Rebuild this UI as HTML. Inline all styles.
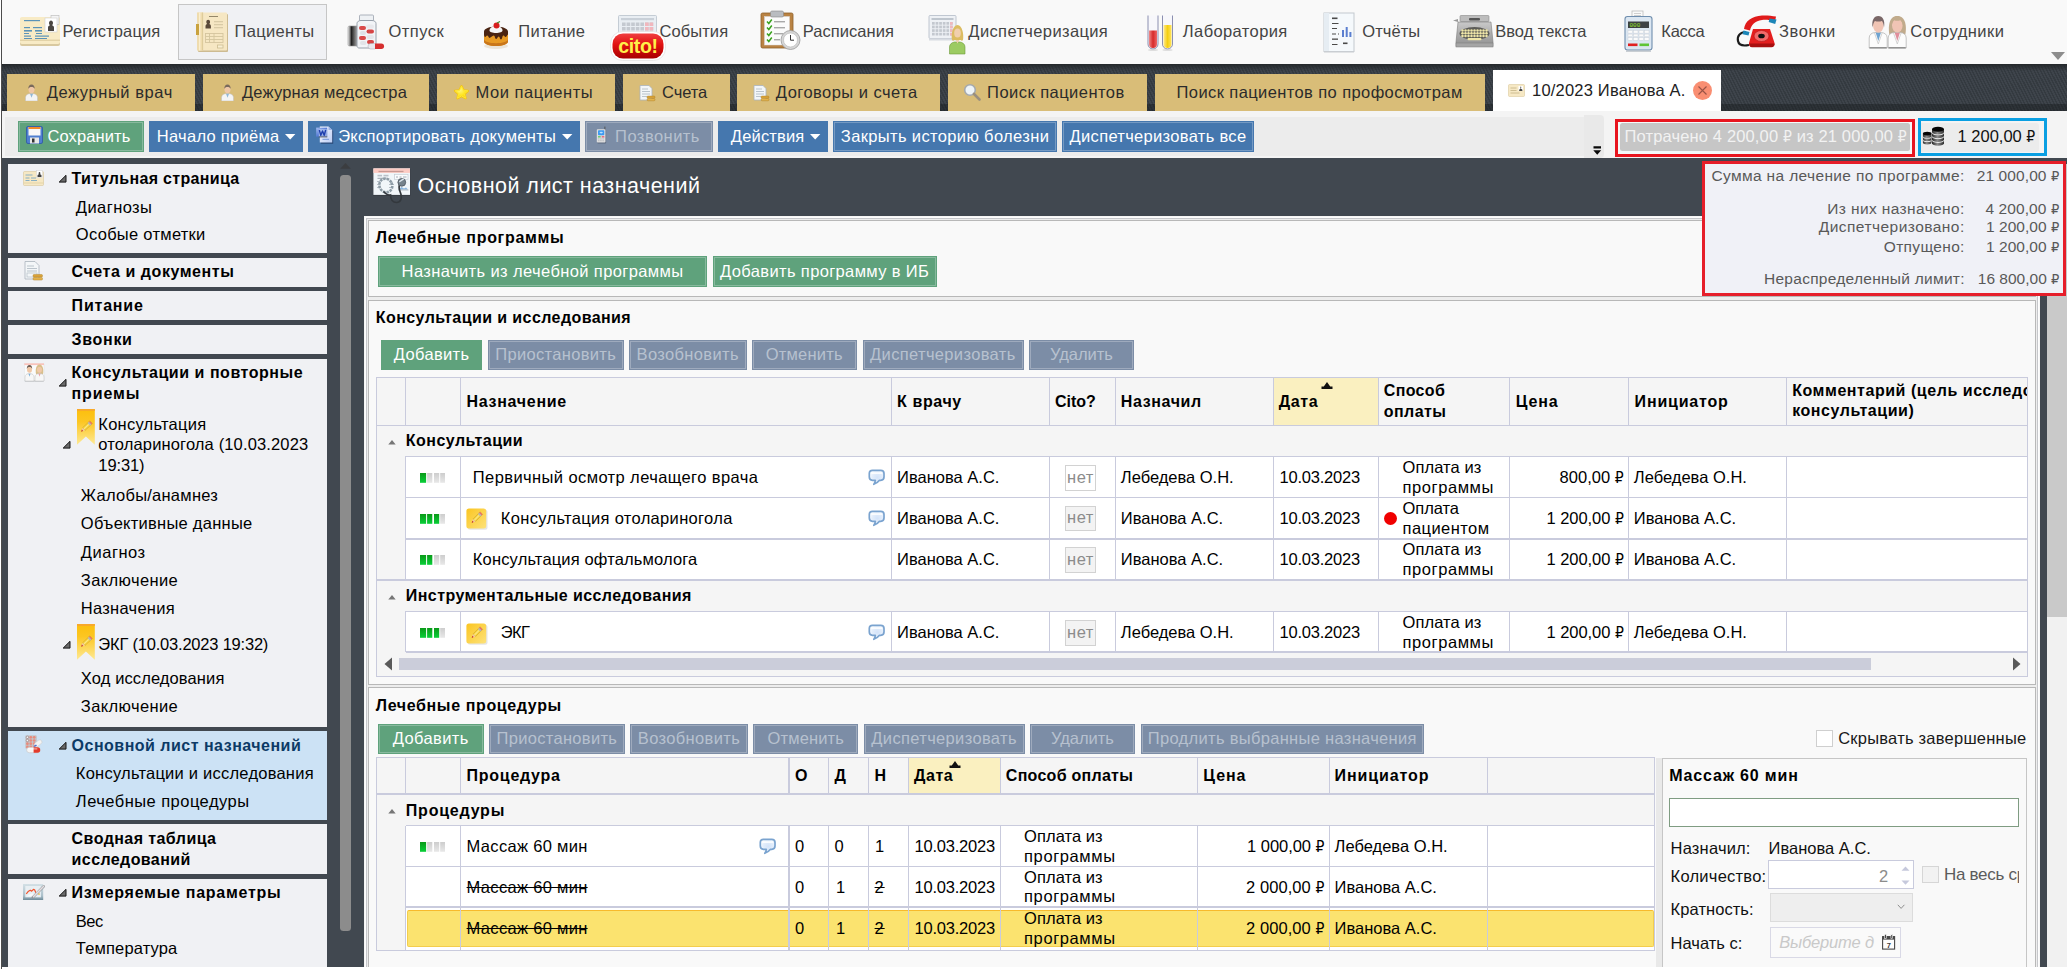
<!DOCTYPE html>
<html lang="ru"><head><meta charset="utf-8"><title>Основной лист назначений</title>
<style>

html,body{margin:0;padding:0}
body{width:2067px;height:969px;overflow:hidden;position:relative;background:#414850;font-family:"Liberation Sans","DejaVu Sans",sans-serif;font-size:17px;color:#000}
div,span.t,svg{position:absolute;box-sizing:border-box}
span.t{white-space:nowrap}
.rub{font-family:"DejaVu Sans Condensed","DejaVu Sans",sans-serif;font-size:.94em}
.ib{outline:1px solid rgba(255,255,255,.26);outline-offset:-2.2px}
.st{text-decoration:line-through;text-decoration-thickness:1.5px}

</style></head>
<body>
<div style="left:0px;top:0px;width:2067px;height:64px;background:#f9f9f9;"></div>
<div style="left:178px;top:4px;width:148.5px;height:55.5px;background:#f0f1f4;border:1px solid #c6c6c6;"></div>
<svg style="left:19px;top:14px" width="42" height="34" viewBox="0 0 42 34"><rect x="1" y="4" width="40" height="28" rx="2" fill="#d9c9a0"/><rect x="1" y="3" width="40" height="27" rx="2" fill="#f8ebc6"/><rect x="1" y="25.5" width="40" height="1.5" fill="#e3d3a8"/><g fill="#5b93b8"><rect x="5" y="6" width="16" height="1.2"/><rect x="5" y="13" width="6" height="1.2"/><rect x="14" y="13" width="9" height="1.2"/><rect x="5" y="16" width="8" height="1.6"/><rect x="16" y="16" width="7" height="1.6"/><rect x="5" y="19" width="5" height="1"/><rect x="17" y="19" width="6" height="1"/><rect x="5" y="21.5" width="7" height="1.2"/><rect x="16" y="21.5" width="14" height="1.2"/><rect x="5" y="24" width="8" height="1"/><rect x="16" y="24" width="12" height="1"/></g><rect x="32" y="1.5" width="8" height="9" fill="#f4f4f4" stroke="#b8b8b8" stroke-width=".6"/><rect x="26" y="4" width="12" height="14" fill="#fff" stroke="#cfcfcf" stroke-width=".6"/><path d="M29 17v-3.5c0-1.5 1.3-2 2-2.3-.8-.6-1-1.400-1-2.400 0-1.500 1-2.400 2-2.400s2 .9 2 2.400c0 1-.2 1.800-1 2.400.7.300 2 .8 2 2.300V17z" fill="#4a4642"/></svg>
<span class="t" style="left:62.5px;top:21px;line-height:21px;font-size:16.5px;color:#444;letter-spacing:0.13px;">Регистрация</span>
<svg style="left:196px;top:11px" width="33" height="41" viewBox="0 0 33 41"><rect x="2" y="3" width="30" height="38" rx="1" fill="#cdbb92"/><rect x="1" y="1.500" width="30" height="38" rx="1" fill="#f6e7c3"/><rect x="1" y="1.500" width="6" height="38" fill="#efdcae"/><rect x="3.300" y="1.500" width="1" height="38" fill="#fff6dc"/><rect x="6.300" y="1.500" width=".8" height="38" fill="#d8c594"/><rect x="0" y="13" width="3" height="11" fill="#c9a23e"/><rect x="13" y="5" width="9" height=".9" fill="#8a7c60"/><path d="M9.500 17.500v-2.500c0-1.300 1-1.700 1.700-2-.6-.5-.9-1.200-.9-2.100 0-1.400.9-2.200 1.900-2.200s1.900.8 1.900 2.200c0 .9-.3 1.600-.9 2.100.7.300 1.700.7 1.700 2v2.500z" fill="#5b4a3a"/><g fill="#d9cba6"><rect x="18" y="10" width="9" height="1.300"/><rect x="18" y="13" width="9" height="1.300"/><rect x="18" y="16" width="9" height="1.300"/></g><rect x="9.500" y="22.500" width="17.500" height="9" fill="none" stroke="#d4c59e" stroke-width=".9"/><path d="M9.500 25.500h17.500M9.500 28.500h17.500M13.500 22.500v9M18 22.500v9" stroke="#d4c59e" stroke-width=".9" fill="none"/><rect x="21.500" y="34" width="5.500" height="3" fill="#f9efd2" stroke="#cdbd92" stroke-width=".8"/></svg>
<span class="t" style="left:234.6px;top:21px;line-height:21px;font-size:16.5px;color:#444;letter-spacing:0.29px;">Пациенты</span>
<svg style="left:347px;top:14px" width="38" height="37" viewBox="0 0 38 37"><defs><linearGradient id="gcap" x1="0" x2="1"><stop offset="0" stop-color="#f4f4f4"/><stop offset=".35" stop-color="#222"/><stop offset="1" stop-color="#bbb"/></linearGradient></defs><rect x="1" y="12" width="10" height="20" rx="1.500" fill="url(#gcap)" stroke="#999" stroke-width=".6"/><rect x="12.500" y="1" width="14" height="6" rx="1" fill="#eef1f4" stroke="#9aa2ad" stroke-width=".8"/><path d="M10 9.500c0-2 2-3 4-3h11c2 0 4 1 4 3V32c0 1-1 2-2 2H12c-1 0-2-1-2-2z" fill="#f2f4f7" stroke="#8e97a3" stroke-width=".9"/><g><rect x="12" y="12" width="7" height="4" rx="2" fill="#d94a4a"/><rect x="19" y="10.500" width="8" height="4" rx="2" fill="#e8e8ec"/><rect x="13" y="17" width="6" height="4" rx="2" fill="#dfe2e8"/><rect x="19.500" y="15.500" width="7.500" height="4" rx="2" fill="#d64545"/><rect x="12" y="22" width="7" height="4" rx="2" fill="#d94a4a"/><rect x="19.500" y="21" width="7.500" height="4" rx="2" fill="#e4e6ea"/><rect x="13" y="27" width="6.500" height="4" rx="2" fill="#e2e4e8"/><rect x="20" y="26" width="7" height="4" rx="2" fill="#d64545"/></g><rect x="21" y="29.500" width="9" height="5.500" rx="2.700" fill="#e9e9ee" stroke="#a8a8b0" stroke-width=".5"/><path d="M28 29.500h6.300a2.700 2.700 0 0 1 0 5.500H28z" fill="#d62f2f"/></svg>
<span class="t" style="left:388.6px;top:21px;line-height:21px;font-size:16.5px;color:#444;letter-spacing:0.43px;">Отпуск</span>
<svg style="left:480px;top:18px" width="32" height="34" viewBox="0 0 32 34"><ellipse cx="16" cy="28" rx="12" ry="3" fill="#e5dccb" opacity=".7"/><path d="M4 14v9.500c0 2.500 5.400 4.500 12 4.500s12-2 12-4.500V14z" fill="#e89a24"/><path d="M4 21v2.500c0 2.500 5.400 4.500 12 4.500s12-2 12-4.500V21c0 2.500-5.400 4.200-12 4.200S4 23.500 4 21z" fill="#c9761a"/><path d="M4 13.500c0-2.800 5.400-5 12-5s12 2.200 12 5v3c-1 .5-1.500 2.500-2.500 2.500s-1-2-2.200-1.500-1 4-2.300 4-1-3-2.300-3-1.200 2.500-2.500 2.500-1.200-3.500-2.500-3.500S10.500 20 9.500 20 8.500 17.500 7.300 17.500 6 19 5.200 19 4 17 4 16z" fill="#4a2412"/><path d="M9.500 12.500c0-2.500 3-4.500 6.500-4.500s6.500 2 6.500 4.500c0 1.500-3 2.500-6.500 2.500s-6.500-1-6.500-2.500z" fill="#f6f6f6"/><circle cx="16.500" cy="7.500" r="3" fill="#d81e1e"/><path d="M17 5l3-1.500" stroke="#3b8a2a" stroke-width="1.200"/></svg>
<span class="t" style="left:518.35px;top:21px;line-height:21px;font-size:16.5px;color:#444;letter-spacing:0.24px;">Питание</span>
<svg style="left:609px;top:14px" width="58" height="48" viewBox="0 0 58 48"><defs><linearGradient id="gcito" x1="0" y1="0" x2="0" y2="1"><stop offset="0" stop-color="#f04040"/><stop offset=".45" stop-color="#e01010"/><stop offset="1" stop-color="#a80000"/></linearGradient></defs><rect x="9.500" y="1.500" width="38" height="26" rx="1" fill="#e9eef3" stroke="#b9c2cc" stroke-width=".8"/><rect x="12" y="4" width="33" height="2.200" fill="#c9d0d8"/><g fill="#c4c9d0"><rect x="13.0" y="8.5" width="3.600" height="3.500"/><rect x="13.0" y="13.0" width="3.600" height="3.500"/><rect x="13.0" y="17.5" width="3.600" height="3.500"/><rect x="17.6" y="8.5" width="3.600" height="3.500"/><rect x="17.6" y="13.0" width="3.600" height="3.500"/><rect x="17.6" y="17.5" width="3.600" height="3.500"/><rect x="22.2" y="8.5" width="3.600" height="3.500"/><rect x="22.2" y="13.0" width="3.600" height="3.500"/><rect x="22.2" y="17.5" width="3.600" height="3.500"/><rect x="26.799999999999997" y="8.5" width="3.600" height="3.500"/><rect x="26.799999999999997" y="13.0" width="3.600" height="3.500"/><rect x="26.799999999999997" y="17.5" width="3.600" height="3.500"/><rect x="31.4" y="8.5" width="3.600" height="3.500"/><rect x="31.4" y="13.0" width="3.600" height="3.500"/><rect x="31.4" y="17.5" width="3.600" height="3.500"/><rect x="36.0" y="8.5" width="3.600" height="3.500"/><rect x="36.0" y="13.0" width="3.600" height="3.500"/><rect x="36.0" y="17.5" width="3.600" height="3.500"/><rect x="40.599999999999994" y="8.5" width="3.600" height="3.500"/><rect x="40.599999999999994" y="13.0" width="3.600" height="3.500"/><rect x="40.599999999999994" y="17.5" width="3.600" height="3.500"/></g><g fill="#f1b7bd"><rect x="36.0" y="8.5" width="3.600" height="3.500"/><rect x="36.0" y="13.0" width="3.600" height="3.500"/><rect x="36.0" y="17.5" width="3.600" height="3.500"/><rect x="40.599999999999994" y="8.5" width="3.600" height="3.500"/><rect x="40.599999999999994" y="13.0" width="3.600" height="3.500"/><rect x="40.599999999999994" y="17.5" width="3.600" height="3.500"/></g><rect x="1.500" y="17.500" width="55" height="29" rx="12" fill="#fff" stroke="#e3e3e3" stroke-width=".8"/><rect x="3.500" y="19.500" width="51" height="25" rx="10.500" fill="url(#gcito)"/><text x="29" y="38.500" text-anchor="middle" font-family="Liberation Sans,sans-serif" font-weight="700" font-size="19.500" fill="#fff04a" letter-spacing="-.3">cito!</text></svg>
<span class="t" style="left:659.6px;top:21px;line-height:21px;font-size:16.5px;color:#444;letter-spacing:0.06px;">События</span>
<svg style="left:759px;top:10px" width="44" height="42" viewBox="0 0 44 42"><rect x="2" y="3" width="32" height="35" rx="1.500" fill="#b98344" stroke="#8e6029" stroke-width=".8"/><rect x="5.500" y="6.500" width="25" height="28.500" fill="#fbfbfb" stroke="#d9d9d9" stroke-width=".5"/><rect x="11.500" y="1" width="13" height="6" rx="1.500" fill="#b9bcc0" stroke="#888" stroke-width=".6"/><g stroke="#3aa21e" stroke-width="1.500" fill="none"><path d="M8 11.500l1.800 2 3-4"/><path d="M8 17.500l1.800 2 3-4"/><path d="M8 23.500l1.800 2 3-4"/><path d="M8 29.500l1.800 2 3-4"/></g><g fill="#a9a9a9"><rect x="15" y="11" width="11" height="1.400"/><rect x="15" y="17" width="11" height="1.400"/><rect x="15" y="23" width="9" height="1.400"/><rect x="15" y="29" width="6" height="1.400"/></g><circle cx="31.500" cy="30" r="9.500" fill="#d6d6d6" stroke="#9a9a9a" stroke-width=".8"/><circle cx="31.500" cy="30" r="7" fill="#fff" stroke="#b5b5b5" stroke-width=".6"/><path d="M31.500 25v5.200h3.500" stroke="#333" stroke-width="1" fill="none"/></svg>
<span class="t" style="left:802.85px;top:21px;line-height:21px;font-size:16.5px;color:#444;letter-spacing:0.03px;">Расписания</span>
<svg style="left:927px;top:14px" width="42" height="42" viewBox="0 0 42 42"><rect x="2" y="1.500" width="27" height="23" rx="1" fill="#eef1f5" stroke="#b3bbc6" stroke-width=".8"/><rect x="4.500" y="4" width="22" height="2" fill="#bfc6ce"/><rect x="2" y="24.500" width="27" height="2" fill="#d8dce2"/><g fill="#c3c8cf"><rect x="5.0" y="8.0" width="2.700" height="2.700"/><rect x="5.0" y="11.6" width="2.700" height="2.700"/><rect x="5.0" y="15.2" width="2.700" height="2.700"/><rect x="5.0" y="18.8" width="2.700" height="2.700"/><rect x="8.6" y="8.0" width="2.700" height="2.700"/><rect x="8.6" y="11.6" width="2.700" height="2.700"/><rect x="8.6" y="15.2" width="2.700" height="2.700"/><rect x="8.6" y="18.8" width="2.700" height="2.700"/><rect x="12.2" y="8.0" width="2.700" height="2.700"/><rect x="12.2" y="11.6" width="2.700" height="2.700"/><rect x="12.2" y="15.2" width="2.700" height="2.700"/><rect x="12.2" y="18.8" width="2.700" height="2.700"/><rect x="15.8" y="8.0" width="2.700" height="2.700"/><rect x="15.8" y="11.6" width="2.700" height="2.700"/><rect x="15.8" y="15.2" width="2.700" height="2.700"/><rect x="15.8" y="18.8" width="2.700" height="2.700"/><rect x="19.4" y="8.0" width="2.700" height="2.700"/><rect x="19.4" y="11.6" width="2.700" height="2.700"/><rect x="19.4" y="15.2" width="2.700" height="2.700"/><rect x="19.4" y="18.8" width="2.700" height="2.700"/><rect x="23.0" y="8.0" width="2.700" height="2.700"/><rect x="23.0" y="11.6" width="2.700" height="2.700"/><rect x="23.0" y="15.2" width="2.700" height="2.700"/><rect x="23.0" y="18.8" width="2.700" height="2.700"/></g><g fill="#f1b7bd"><rect x="23.0" y="8.0" width="2.700" height="2.700"/><rect x="23.0" y="11.6" width="2.700" height="2.700"/><rect x="23.0" y="15.2" width="2.700" height="2.700"/><rect x="23.0" y="18.8" width="2.700" height="2.700"/></g><path d="M22.500 40v-7c0-3 2.500-4.500 5-5h5.500c2.500.5 5 2 5 5v7z" fill="#9ccb62" stroke="#6f9c3e" stroke-width=".6"/><path d="M25 26c-1-5 .5-15 5.500-15s6.500 10 5.500 15c-1 1.500-2.500 0-2.500 0h-6s-1.500 1.500-2.500 0z" fill="#dcbc62"/><ellipse cx="30.500" cy="19" rx="3.300" ry="4.500" fill="#f1cfae"/><path d="M28.500 26l2 3.500 2-3.500z" fill="#f1cfae"/></svg>
<span class="t" style="left:968.35px;top:21px;line-height:21px;font-size:16.5px;color:#444;letter-spacing:0.37px;">Диспетчеризация</span>
<svg style="left:1146px;top:14px" width="30" height="37" viewBox="0 0 30 37"><defs><linearGradient id="gr1" x1="0" x2="1"><stop offset="0" stop-color="#f08a8a"/><stop offset=".5" stop-color="#d62a2a"/><stop offset="1" stop-color="#e66"/></linearGradient><linearGradient id="gy1" x1="0" x2="1"><stop offset="0" stop-color="#ffe98a"/><stop offset=".5" stop-color="#f5cf12"/><stop offset="1" stop-color="#ffe45a"/></linearGradient></defs><path d="M2 1.500v28.500a5 5 0 0 0 10 0V1.500" fill="#f7f7fb" stroke="#8b8fb0" stroke-width="1"/><path d="M3 16.500h8V30a4 4 0 0 1-8 0z" fill="url(#gr1)"/><path d="M16.500 1.500v28.500a5 5 0 0 0 10 0V1.500" fill="#f7f7fb" stroke="#8b8fb0" stroke-width="1"/><path d="M17.500 11h8v19a4 4 0 0 1-8 0z" fill="url(#gy1)"/><ellipse cx="7" cy="36" rx="5" ry="1" fill="#ccc" opacity=".6"/><ellipse cx="21.500" cy="36" rx="5" ry="1" fill="#ccc" opacity=".6"/></svg>
<span class="t" style="left:1182.85px;top:21px;line-height:21px;font-size:16.5px;color:#444;letter-spacing:0.39px;">Лаборатория</span>
<svg style="left:1322px;top:11px" width="34" height="42" viewBox="0 0 34 42"><rect x="2" y="2" width="30" height="38.500" fill="#f5f9fc" stroke="#c3c9cf" stroke-width="1"/><rect x="2" y="2" width="5" height="38.500" fill="#e6edf3"/><rect x="2" y="40" width="30" height="1.500" fill="#c9cdd2"/><g fill="#4a4a4a"><rect x="10" y="6.500" width="5.500" height="1.600"/><rect x="10" y="12" width="6.500" height="1"/><rect x="10" y="17" width="5" height="1"/><rect x="10" y="22.500" width="4" height="1"/><rect x="16" y="22.500" width="1" height="1"/><rect x="10" y="27.500" width="6" height="1.300"/><rect x="10" y="33" width="5.500" height="1"/><rect x="21" y="31.500" width="4.500" height="1.600"/></g><g fill="#5b7fd0"><rect x="20" y="19" width="2" height="7"/><rect x="23.700" y="16" width="2" height="10"/><rect x="27.400" y="21" width="2" height="5"/></g></svg>
<span class="t" style="left:1362.35px;top:21px;line-height:21px;font-size:16.5px;color:#444;letter-spacing:0.04px;">Отчёты</span>
<svg style="left:1452px;top:14px" width="42" height="35" viewBox="0 0 42 35"><defs><linearGradient id="gtw" x1="0" y1="0" x2="0" y2="1"><stop offset="0" stop-color="#c9c9c9"/><stop offset="1" stop-color="#8f8f8f"/></linearGradient></defs><rect x="8" y="1.500" width="29" height="6" rx="1" fill="#bdbdbd" stroke="#8a8a8a" stroke-width=".6"/><path d="M1 6.500l5-1.500v3z" fill="#999"/><rect x="17" y="4" width="11" height="2.500" rx="1" fill="#555"/><path d="M6 8h33l2 20v4.500H4V28z" fill="url(#gtw)" stroke="#7c7c7c" stroke-width=".6"/><ellipse cx="22.500" cy="19.500" rx="15" ry="6.500" fill="#5c5c58"/><g fill="#efe6a8"><circle cx="10.5" cy="16.5" r="1.250"/><circle cx="10.5" cy="19.3" r="1.250"/><circle cx="10.5" cy="22.1" r="1.250"/><circle cx="13.5" cy="16.5" r="1.250"/><circle cx="13.5" cy="19.3" r="1.250"/><circle cx="13.5" cy="22.1" r="1.250"/><circle cx="16.5" cy="16.5" r="1.250"/><circle cx="16.5" cy="19.3" r="1.250"/><circle cx="16.5" cy="22.1" r="1.250"/><circle cx="19.5" cy="16.5" r="1.250"/><circle cx="19.5" cy="19.3" r="1.250"/><circle cx="19.5" cy="22.1" r="1.250"/><circle cx="22.5" cy="16.5" r="1.250"/><circle cx="22.5" cy="19.3" r="1.250"/><circle cx="22.5" cy="22.1" r="1.250"/><circle cx="25.5" cy="16.5" r="1.250"/><circle cx="25.5" cy="19.3" r="1.250"/><circle cx="25.5" cy="22.1" r="1.250"/><circle cx="28.5" cy="16.5" r="1.250"/><circle cx="28.5" cy="19.3" r="1.250"/><circle cx="28.5" cy="22.1" r="1.250"/><circle cx="31.5" cy="16.5" r="1.250"/><circle cx="31.5" cy="19.3" r="1.250"/><circle cx="31.5" cy="22.1" r="1.250"/><circle cx="34.5" cy="16.5" r="1.250"/><circle cx="34.5" cy="19.3" r="1.250"/><circle cx="34.5" cy="22.1" r="1.250"/></g><rect x="15.500" y="24" width="14" height="2.200" rx="1" fill="#efe6a8"/><rect x="4" y="29" width="37" height="4" fill="#a5a5a5" stroke="#7c7c7c" stroke-width=".5"/></svg>
<span class="t" style="left:1495.35px;top:21px;line-height:21px;font-size:16.5px;color:#444;letter-spacing:-0.03px;">Ввод текста</span>
<svg style="left:1623px;top:10px" width="31" height="42" viewBox="0 0 31 42"><rect x="9" y="1" width="11" height="8" fill="#fafafa" stroke="#b5b5b5" stroke-width=".7"/><path d="M11 3.500h7M11 5.500h7" stroke="#c5c5c5" stroke-width=".8"/><rect x="2" y="6.500" width="27" height="33.500" rx="2.500" fill="#dbe6f1" stroke="#6f8eae" stroke-width="1.100"/><rect x="5" y="11.500" width="21" height="6.500" fill="#3d4144"/><text x="6.500" y="17" font-size="6" font-family="Liberation Mono,monospace" fill="#9be22a">000</text><g fill="#fbfbfb" stroke="#c9ced4" stroke-width=".4"><rect x="5.0" y="20.5" width="4.500" height="2.600"/><rect x="5.0" y="24.1" width="4.500" height="2.600"/><rect x="5.0" y="27.7" width="4.500" height="2.600"/><rect x="10.5" y="20.5" width="4.500" height="2.600"/><rect x="10.5" y="24.1" width="4.500" height="2.600"/><rect x="10.5" y="27.7" width="4.500" height="2.600"/><rect x="16.0" y="20.5" width="4.500" height="2.600"/><rect x="16.0" y="24.1" width="4.500" height="2.600"/><rect x="16.0" y="27.7" width="4.500" height="2.600"/><rect x="21.5" y="20.5" width="4.500" height="2.600"/><rect x="21.5" y="24.1" width="4.500" height="2.600"/><rect x="21.5" y="27.7" width="4.500" height="2.600"/></g><rect x="5" y="33.500" width="9.500" height="2.600" fill="#e02020"/><rect x="16.500" y="33.500" width="9.500" height="2.600" fill="#5fc436"/><rect x="3" y="40.500" width="25" height="1.200" fill="#b5bcc4"/></svg>
<span class="t" style="left:1661.35px;top:21px;line-height:21px;font-size:16.5px;color:#444;letter-spacing:-0.28px;">Касса</span>
<svg style="left:1736px;top:14px" width="43" height="36" viewBox="0 0 43 36"><path d="M10 18c-6 0-9 4-8 9s6 5 11 4" fill="none" stroke="#1c1c1c" stroke-width="2.200"/><path d="M8 15c1-8 8-13 18-13.500 5-.300 10 .5 14 1l-1 5c-5-1.500-9-2-13-1.500-7 .9-11 5-12 10.500z" fill="#e01b1b"/><path d="M33.500 4.500l7 1-1.300 4.500-6.500-2z" fill="#1c86b8"/><path d="M7.500 16.500l6 1.500-1 3.500-6-1.200z" fill="#1c86b8"/><path d="M17 15h17l4.500 14c.5 2-1 4-3 4H16c-2 0-3.500-2-3-4z" fill="#e41e1e"/><path d="M13.500 29.500h25c.5 2-1 3.700-3 3.700H16c-2 0-3-1.700-2.500-3.700z" fill="#a80f0f"/><ellipse cx="25.500" cy="22" rx="7.500" ry="5.500" fill="#f26a6a" stroke="#b01414" stroke-width=".6"/><ellipse cx="25.500" cy="22" rx="3.300" ry="2.300" fill="#111"/></svg>
<span class="t" style="left:1779.1px;top:21px;line-height:21px;font-size:16.5px;color:#444;letter-spacing:0.55px;">Звонки</span>
<svg style="left:1868px;top:15px" width="40" height="35" viewBox="0 0 40 35"><path d="M1.2 33v-10c0-3.500 2.500-5 5.500-5.500h7c3 .5 5.500 2 5.500 5.500v10z" fill="#fcfcfc" stroke="#adadad" stroke-width=".7"/><path d="M1.5 32.800h17.200" stroke="#7f7f7f" stroke-width="1.200"/><path d="M7.7 17.700h5.200l-2.600 8.300z" fill="#6fa3cf"/><path d="M6.5 18l3.800 11 3.800-11" stroke="#c9c9c9" stroke-width=".8" fill="none"/><ellipse cx="10.3" cy="10.300" rx="5.300" ry="7.300" fill="#f0c4b4"/><path d="M4.6 12.500c-1.200-7 1.200-11.500 5.700-11.500s7 4.500 5.700 11.500c-.4-3.500-1.200-5.800-2.200-6.500-2 .8-5 .8-6.800 0-1 .8-1.900 3-2.400 6.500z" fill="#7a6767"/><path d="M21.3 19.500c-1.200-8-.5-18.500 8-18.500s9.500 10.500 8 18.500z" fill="#c1ab8c"/><path d="M20.2 33v-10c0-3.500 2.500-5 5.500-5.500h7c3 .5 5.500 2 5.500 5.500v10z" fill="#fcfcfc" stroke="#adadad" stroke-width=".7"/><path d="M20.5 32.800h17.200" stroke="#7f7f7f" stroke-width="1.200"/><path d="M26.7 17.700h5.200l-2.600 8.300z" fill="#e08e9b"/><path d="M25.5 18l3.800 11 3.800-11" stroke="#c9c9c9" stroke-width=".8" fill="none"/><ellipse cx="29.3" cy="10.300" rx="5.300" ry="7.300" fill="#f0c4b4"/><path d="M23.3 12c-.5-6 1.500-10.800 6-10.800s6.500 4.800 6 10.800c-.8-4-2-6.300-3-6.800-2 .8-4.500.8-6 0-1.200.8-2.200 2.800-3 6.800z" fill="#c1ab8c"/></svg>
<span class="t" style="left:1910.35px;top:21px;line-height:21px;font-size:16.5px;color:#444;letter-spacing:0.47px;">Сотрудники</span>
<svg style="left:2050px;top:52px" width="16" height="9"><path d="M1 0h14l-7 8z" fill="#8d8d8d"/></svg>
<div style="left:0px;top:64px;width:2067px;height:47px;background:repeating-linear-gradient(63deg,#343a40 0 1.4px,#3e444b 1.4px 2.9px);"></div>
<div style="left:0px;top:64px;width:2067px;height:7px;background:linear-gradient(#24282b,rgba(36,40,43,0));"></div>
<div style="left:0px;top:104px;width:2067px;height:7px;background:repeating-linear-gradient(63deg,#272c30 0 1.4px,#2d3237 1.4px 2.9px);"></div>
<div style="left:7px;top:74px;width:188px;height:36.5px;background:#d9bd78;"></div>
<svg style="left:25px;top:84px" width="13" height="17" viewBox="0 0 13 17"><path d="M.5 17v-3.500c0-2.500 2-3.500 4-3.800h4c2 .3 4 1.300 4 3.800V17z" fill="#f4f4f4" stroke="#bdbdbd" stroke-width=".5"/><path d="M5 9.800l1.500 4 1.500-4z" fill="#8fb6d6"/><ellipse cx="6.500" cy="5.500" rx="3" ry="3.800" fill="#efc7a6"/><path d="M3.300 5c0-3 1.200-4.500 3.200-4.500S9.700 2 9.700 5C9 3.500 8 3 6.500 3S4 3.500 3.300 5z" fill="#7a6a5c"/></svg>
<span class="t" style="left:46.8px;top:82px;line-height:21px;font-size:16.5px;color:#2b2b2b;letter-spacing:0.56px;">Дежурный врач</span>
<div style="left:203px;top:74px;width:226px;height:36.5px;background:#d9bd78;"></div>
<svg style="left:221px;top:84px" width="13" height="17" viewBox="0 0 13 17"><path d="M.5 17v-3.500c0-2.500 2-3.500 4-3.800h4c2 .3 4 1.300 4 3.800V17z" fill="#f4f4f4" stroke="#bdbdbd" stroke-width=".5"/><path d="M5 9.800l1.500 4 1.500-4z" fill="#8fb6d6"/><ellipse cx="6.500" cy="5.500" rx="3" ry="3.800" fill="#efc7a6"/><path d="M3.300 5c0-3 1.200-4.500 3.200-4.500S9.700 2 9.700 5C9 3.500 8 3 6.500 3S4 3.500 3.300 5z" fill="#7a6a5c"/></svg>
<span class="t" style="left:242px;top:82px;line-height:21px;font-size:16.5px;color:#2b2b2b;letter-spacing:0.18px;">Дежурная медсестра</span>
<div style="left:437px;top:74px;width:178px;height:36.5px;background:#d9bd78;"></div>
<svg style="left:453px;top:83.6px" width="17" height="17" viewBox="0 0 17 17"><defs><radialGradient id="gst" cx=".4" cy=".35" r=".7"><stop offset="0" stop-color="#fff47a"/><stop offset=".6" stop-color="#ffe51e"/><stop offset="1" stop-color="#f7c90a"/></radialGradient></defs><path d="M8.500 2.200l1.900 4.100 4.500.5-3.400 3 1 4.400-4-2.300-4 2.300 1-4.400-3.400-3 4.500-.5z" fill="url(#gst)" stroke="#f3c412" stroke-width="2.300" stroke-linejoin="round"/><path d="M8.500 2.200l1.900 4.100 4.500.5-3.400 3 1 4.400-4-2.300-4 2.300 1-4.400-3.400-3 4.500-.5z" fill="url(#gst)" stroke="#ffe735" stroke-width="1" stroke-linejoin="round"/></svg>
<span class="t" style="left:475.6px;top:82px;line-height:21px;font-size:16.5px;color:#2b2b2b;letter-spacing:0.51px;">Мои пациенты</span>
<div style="left:623px;top:74px;width:107px;height:36.5px;background:#d9bd78;"></div>
<svg style="left:639px;top:84.7px" width="17" height="18" viewBox="0 0 17 18"><path d="M1 .5h9l3 3V15H1z" fill="#f3f6f8" stroke="#a9b4bd" stroke-width=".8"/><path d="M3 4h6M3 6.500h8M3 9h8M3 11.500h5" stroke="#b4bec6" stroke-width=".9"/><rect x="8" y="11" width="8" height="2.300" rx="1" fill="#d9a33a" stroke="#a87818" stroke-width=".4"/><rect x="8" y="13.500" width="8" height="2.300" rx="1" fill="#e4b24a" stroke="#a87818" stroke-width=".4"/></svg>
<span class="t" style="left:662.1px;top:82px;line-height:21px;font-size:16.5px;color:#2b2b2b;letter-spacing:-0.09px;">Счета</span>
<div style="left:736.75px;top:74px;width:202.75px;height:36.5px;background:#d9bd78;"></div>
<svg style="left:753px;top:84.7px" width="17" height="18" viewBox="0 0 17 18"><path d="M1 .5h9l3 3V15H1z" fill="#f3f6f8" stroke="#a9b4bd" stroke-width=".8"/><path d="M3 4h6M3 6.500h8M3 9h8M3 11.500h5" stroke="#b4bec6" stroke-width=".9"/><rect x="8" y="11" width="8" height="2.300" rx="1" fill="#d9a33a" stroke="#a87818" stroke-width=".4"/><rect x="8" y="13.500" width="8" height="2.300" rx="1" fill="#e4b24a" stroke="#a87818" stroke-width=".4"/></svg>
<span class="t" style="left:775.85px;top:82px;line-height:21px;font-size:16.5px;color:#2b2b2b;letter-spacing:0.46px;">Договоры и счета</span>
<div style="left:947.5px;top:74px;width:199.5px;height:36.5px;background:#d9bd78;"></div>
<svg style="left:963px;top:83px" width="18" height="18" viewBox="0 0 18 18"><circle cx="7" cy="7" r="5.300" fill="#eef4f8" stroke="#a4a9ae" stroke-width="1.600"/><path d="M11 11l5.500 5.500" stroke="#9a8f7f" stroke-width="2.600" stroke-linecap="round"/></svg>
<span class="t" style="left:987.1px;top:82px;line-height:21px;font-size:16.5px;color:#2b2b2b;letter-spacing:0.46px;">Поиск пациентов</span>
<div style="left:1155px;top:74px;width:329.5px;height:36.5px;background:#d9bd78;"></div>
<span class="t" style="left:1176.6px;top:82px;line-height:21px;font-size:16.5px;color:#2b2b2b;letter-spacing:0.4px;">Поиск пациентов по профосмотрам</span>
<div style="left:1492.75px;top:70px;width:228.25px;height:41px;background:#fff;"></div>
<svg style="left:1508px;top:84px" width="17" height="13" viewBox="0 0 17 13"><rect x=".5" y=".5" width="16" height="12" rx="1" fill="#f6e8c4" stroke="#dccb9e" stroke-width=".6"/><path d="M2.500 4h6M2.500 6.500h6M2.500 9h9" stroke="#c9b98c" stroke-width=".9"/><rect x="10.500" y="2" width="4.500" height="5" fill="#fff"/><path d="M11.200 7v-1c0-.8.800-1 1.500-1.200-.5-.5-.5-2.300.1-2.300s.6 1.800.1 2.300c.7.200 1.500.400 1.500 1.200v1z" fill="#444"/></svg>
<span class="t" style="left:1532.1px;top:80px;line-height:21px;font-size:16.5px;color:#222;letter-spacing:0.19px;">10/2023 Иванова А.</span>
<svg style="left:1693px;top:81px" width="19" height="19"><circle cx="9.500" cy="9.500" r="9.500" fill="#f98e72"/><path d="M5.500 5.500l8 8M13.500 5.500l-8 8" stroke="#9a5346" stroke-width="1.100" fill="none"/></svg>
<div style="left:0px;top:110.5px;width:2067px;height:47.5px;background:#f4f4f4;"></div>
<div style="left:5px;top:117px;width:1585px;height:39px;background:#ececec;"></div>
<div style="left:1584px;top:115px;width:20px;height:42.5px;background:#e9e9e9;border-radius:0 4px 4px 0;"></div>
<svg style="left:1592.500px;top:145.800px" width="9" height="10"><path d="M.5 .3h7.500v2.100H.5zM.3 4.300h7.900l-3.950 4.500z" fill="#0a0a0a"/></svg>
<div class="ib" style="left:18px;top:121.25px;width:126px;height:30.5px;background:#5fa27c"></div>
<svg style="left:26px;top:126px" width="17" height="18" viewBox="0 0 17 18"><rect x=".5" y=".5" width="16" height="17" rx="1.500" fill="#4f7fd0" stroke="#2f57a8" stroke-width=".8"/><rect x="2.500" y="1" width="12" height="8.500" fill="#f8f8f8"/><rect x="2.500" y="1" width="12" height="2" fill="#f28a2a"/><rect x="4" y="11.500" width="9" height="6" fill="#e9e9e9"/><rect x="6" y="12.500" width="2.500" height="4" fill="#333"/></svg>
<span class="t" style="left:47.5px;top:125.7px;line-height:21px;font-size:16.5px;color:#fff;letter-spacing:0.1px;">Сохранить</span>
<div class="" style="left:149px;top:121.25px;width:154px;height:30.5px;background:#4577ae"></div>
<span class="t" style="left:156.8px;top:125.7px;line-height:21px;font-size:16.5px;color:#fff;letter-spacing:0.28px;">Начало приёма</span>
<svg style="left:284.5px;top:134px" width="11" height="6"><path d="M0 0h10.4l-5.2 5.6z" fill="#fff"/></svg>
<div class="" style="left:308px;top:121.25px;width:271.5px;height:30.5px;background:#4577ae"></div>
<svg style="left:316px;top:126px" width="18" height="18" viewBox="0 0 18 18"><defs><linearGradient id="gwp" x1="0" y1="0" x2="1" y2="1"><stop offset="0" stop-color="#fbfcff"/><stop offset="1" stop-color="#bccdf4"/></linearGradient><linearGradient id="gwb" x1="0" y1="0" x2="1" y2="1"><stop offset="0" stop-color="#a9c0f2"/><stop offset=".5" stop-color="#5a7fd8"/><stop offset="1" stop-color="#2446b0"/></linearGradient></defs><path d="M4.800 1.500h8.700l3.700 3.500V17.700H4.800z" fill="#27426f" opacity=".85"/><path d="M3.800 .5h8.700l3.700 3.500V16.500H3.800z" fill="url(#gwp)"/><path d="M12.500 .5v3.500h3.700z" fill="#9db3e6"/><path d="M6.500 13.300h6.500" stroke="#6c8fd9" stroke-width=".9"/><rect x=".2" y="1.600" width="11" height="9" fill="url(#gwb)"/><rect x="2.800" y="3.200" width="8.300" height="7.600" fill="#dfe9fb" opacity=".55"/><path d="M3.300 4l1.500 5.300 1.700-4.300 1.700 4.300L9.700 4" stroke="#1f3fae" stroke-width="1.400" fill="none" stroke-linejoin="round"/><path d="M2.800 10.900h8.500" stroke="#3a3f48" stroke-width=".8"/></svg>
<span class="t" style="left:338.2px;top:125.7px;line-height:21px;font-size:16.5px;color:#fff;letter-spacing:0.29px;">Экспортировать документы</span>
<svg style="left:562px;top:134px" width="11" height="6"><path d="M0 0h10.4l-5.2 5.6z" fill="#fff"/></svg>
<div class="ib" style="left:585px;top:121.25px;width:127.5px;height:30.5px;background:#7c8da6"></div>
<svg style="left:596px;top:126px" width="11" height="18" viewBox="0 0 11 18"><rect x="1.300" y="4" width="8.800" height="13.500" rx=".8" fill="#3f4b5c" opacity=".55"/><rect x="8.200" y=".6" width="1.300" height="3.400" fill="#5a5f66"/><rect x=".8" y="3.200" width="8.700" height="13.400" rx=".8" fill="#dedede"/><rect x="2" y="4.300" width="6.300" height="5" rx=".8" fill="#3d9bf2"/><ellipse cx="5.200" cy="6.600" rx="1.700" ry=".8" fill="#bfe2ff"/><rect x="2" y="10.300" width="2.700" height="1.100" fill="#3fc44a"/><rect x="5.700" y="10.300" width="2.600" height="1.100" fill="#e8425a"/><path d="M2 12.900h6.300M2 14.700h6.300" stroke="#aeb2b8" stroke-width=".8" stroke-dasharray="1.500 .7"/></svg>
<span class="t" style="left:615.1px;top:125.7px;line-height:21px;font-size:16.5px;color:#b7c1cf;letter-spacing:0.46px;">Позвонить</span>
<div class="" style="left:718px;top:121.25px;width:109.5px;height:30.5px;background:#4577ae"></div>
<span class="t" style="left:730.85px;top:125.7px;line-height:21px;font-size:16.5px;color:#fff;letter-spacing:0.16px;">Действия</span>
<svg style="left:809.5px;top:134px" width="11" height="6"><path d="M0 0h10.4l-5.2 5.6z" fill="#fff"/></svg>
<div class="ib" style="left:833px;top:121.25px;width:223.5px;height:30.5px;background:#4577ae"></div>
<span class="t" style="left:840.85px;top:125.7px;line-height:21px;font-size:16.5px;color:#fff;letter-spacing:0.36px;">Закрыть историю болезни</span>
<div class="ib" style="left:1062px;top:121.25px;width:191.75px;height:30.5px;background:#4577ae"></div>
<span class="t" style="left:1069.6px;top:125.7px;line-height:21px;font-size:16.5px;color:#fff;letter-spacing:0.31px;">Диспетчеризовать все</span>
<div style="left:1615px;top:118.8px;width:299.5px;height:38.2px;background:#f4f9f9;border:3px solid #e8151f;"></div>
<div style="left:1620.2px;top:122.8px;width:289.8px;height:27.9px;background:#c6c6c6;border-radius:2.5px;"></div>
<span class="t" style="left:1624.6px;top:125.7px;line-height:21px;font-size:16.5px;color:#f2f2f2;letter-spacing:0.14px;">Потрачено 4 200,00 <span class="rub">₽</span> из 21 000,00 <span class="rub">₽</span></span>
<div style="left:1917.5px;top:118px;width:129.5px;height:37.5px;background:#f4f4f4;border:3px solid #0a9fe2;"></div>
<div style="left:1921px;top:123px;width:117.5px;height:28.5px;background:#ececec;border-radius:0 3px 3px 0;"></div>
<svg style="left:1922px;top:126px" width="23" height="22" viewBox="0 0 23 22"><defs><linearGradient id="gcn" x1="0" x2="1"><stop offset="0" stop-color="#2a2a2a"/><stop offset=".45" stop-color="#8c8c8c"/><stop offset="1" stop-color="#2e2e2e"/></linearGradient></defs><path d="M0.9000000000000004 14.2v3.3a4.3 1.9 0 0 0 8.6 0v-3.3z" fill="#ededed"/><path d="M0.9000000000000004 14.2v2.4a4.3 1.9 0 0 0 8.6 0v-2.4z" fill="url(#gcn)"/><ellipse cx="5.2" cy="14.2" rx="4.3" ry="1.9" fill="#1c1c1c"/><path d="M0.9000000000000004 10.899999999999999v3.3a4.3 1.9 0 0 0 8.6 0v-3.3z" fill="#ededed"/><path d="M0.9000000000000004 10.899999999999999v2.4a4.3 1.9 0 0 0 8.6 0v-2.4z" fill="url(#gcn)"/><ellipse cx="5.2" cy="10.899999999999999" rx="4.3" ry="1.9" fill="#1c1c1c"/><path d="M0.9000000000000004 7.6v3.3a4.3 1.9 0 0 0 8.6 0v-3.3z" fill="#ededed"/><path d="M0.9000000000000004 7.6v2.4a4.3 1.9 0 0 0 8.6 0v-2.4z" fill="url(#gcn)"/><ellipse cx="5.2" cy="7.6" rx="4.3" ry="1.9" fill="#050505"/><path d="M10 14.400000000000002v3.7a6 2.5 0 0 0 12 0v-3.7z" fill="#ededed"/><path d="M10 14.400000000000002v2.8000000000000003a6 2.5 0 0 0 12 0v-2.8000000000000003z" fill="url(#gcn)"/><ellipse cx="16" cy="14.400000000000002" rx="6" ry="2.5" fill="#1c1c1c"/><path d="M10 10.7v3.7a6 2.5 0 0 0 12 0v-3.7z" fill="#ededed"/><path d="M10 10.7v2.8000000000000003a6 2.5 0 0 0 12 0v-2.8000000000000003z" fill="url(#gcn)"/><ellipse cx="16" cy="10.7" rx="6" ry="2.5" fill="#1c1c1c"/><path d="M10 7.0v3.7a6 2.5 0 0 0 12 0v-3.7z" fill="#ededed"/><path d="M10 7.0v2.8000000000000003a6 2.5 0 0 0 12 0v-2.8000000000000003z" fill="url(#gcn)"/><ellipse cx="16" cy="7.0" rx="6" ry="2.5" fill="#1c1c1c"/><path d="M10 3.3v3.7a6 2.5 0 0 0 12 0v-3.7z" fill="#ededed"/><path d="M10 3.3v2.8000000000000003a6 2.5 0 0 0 12 0v-2.8000000000000003z" fill="url(#gcn)"/><ellipse cx="16" cy="3.3" rx="6" ry="2.5" fill="#050505"/></svg>
<span class="t" style="left:1957.6px;top:125.7px;line-height:21px;font-size:16.5px;color:#111;letter-spacing:-0.01px;">1 200,00 <span class="rub">₽</span></span>
<div style="left:8px;top:164px;width:319px;height:89px;background:#f0f1f4;"></div>
<div style="left:8px;top:258px;width:319px;height:29px;background:#f0f1f4;"></div>
<div style="left:8px;top:291px;width:319px;height:29px;background:#f0f1f4;"></div>
<div style="left:8px;top:325px;width:319px;height:29px;background:#f0f1f4;"></div>
<div style="left:8px;top:359px;width:319px;height:368px;background:#f0f1f4;"></div>
<div style="left:8px;top:731px;width:319px;height:89px;background:#cce2f5;"></div>
<div style="left:8px;top:824px;width:319px;height:50px;background:#f0f1f4;"></div>
<div style="left:8px;top:879px;width:319px;height:91px;background:#f0f1f4;"></div>
<div style="left:340.25px;top:174.5px;width:10.75px;height:756.25px;background:#8c8c8c;border-radius:3.5px;"></div>
<svg style="left:340px;top:163px" width="11" height="6"><path d="M5.500 0l5.300 5.800H.2z" fill="#3b3d40"/></svg>
<svg style="left:23px;top:170px" width="21" height="16" viewBox="0 0 21 16"><rect x=".5" y="1.500" width="20" height="14" rx="1" fill="#f6e8c4" stroke="#d8c89c" stroke-width=".6"/><path d="M2.500 5h7M2.500 8h4M8 8h5M2.500 10.500h4M8 10.500h6" stroke="#7aa8c4" stroke-width=".9"/><rect x=".5" y="12.500" width="20" height="1" fill="#e3d3a8"/><rect x="13.500" y=".5" width="6" height="7" fill="#fff" stroke="#ccc" stroke-width=".4"/><path d="M14.500 7v-1.500c0-.8.800-1 1.400-1.200-.4-.4-.5-2.300.6-2.300s1 1.900.6 2.300c.6.200 1.400.400 1.400 1.200V7z" fill="#444"/></svg>
<svg style="left:57.8px;top:174px" width="9" height="9" viewBox="0 0 9 9"><path d="M8 1.300v6.800H1.200z" fill="#6a6a6a" stroke="#161616" stroke-width="1" stroke-linejoin="round"/></svg>
<span class="t" style="left:71.6px;top:168.75px;line-height:20px;font-size:16px;font-weight:700;letter-spacing:0.32px;">Титульная страница</span>
<span class="t" style="left:75.85px;top:197px;line-height:21px;font-size:16.5px;letter-spacing:0.43px;">Диагнозы</span>
<span class="t" style="left:75.85px;top:224px;line-height:21px;font-size:16.5px;letter-spacing:0.28px;">Особые отметки</span>
<svg style="left:24px;top:261px" width="19" height="21" viewBox="0 0 19 21"><path d="M1 .5h10l4 4V18H1z" fill="#f3f6f8" stroke="#a9b4bd" stroke-width=".8"/><path d="M3 5h7M3 7.500h10M3 10h10" stroke="#b4bec6" stroke-width=".9"/><rect x="3" y="12" width="10" height="4" fill="none" stroke="#b4bec6" stroke-width=".7"/><rect x="9" y="13.500" width="9.500" height="2.600" rx="1" fill="#d9a33a" stroke="#a87818" stroke-width=".4"/><rect x="9" y="16.500" width="9.500" height="2.600" rx="1" fill="#e4b24a" stroke="#a87818" stroke-width=".4"/></svg>
<span class="t" style="left:71.6px;top:261.75px;line-height:20px;font-size:16px;font-weight:700;letter-spacing:0.56px;">Счета и документы</span>
<span class="t" style="left:71.6px;top:295.5px;line-height:20px;font-size:16px;font-weight:700;letter-spacing:0.8px;">Питание</span>
<span class="t" style="left:71.6px;top:329.5px;line-height:20px;font-size:16px;font-weight:700;letter-spacing:0.68px;">Звонки</span>
<svg style="left:23.5px;top:362.5px" width="21" height="19" viewBox="0 0 21 19"><rect x=".3" y=".3" width="19.700" height="18" rx="1" fill="#fafbfc" stroke="#d9dce0" stroke-width=".5"/><rect x=".3" y=".3" width="19.700" height="1.800" fill="#f9c3bb"/><rect x=".8" y="17.500" width="18.800" height="1" fill="#b9bcc0"/><path d="M1.0 18v-4c0-2 1.500-3 3-3.300h3c1.500.300 3 1.300 3 3.300v4z" fill="#f7f7f7" stroke="#bcbcbc" stroke-width=".5"/><path d="M4.5 10.800l1 3 1-3z" fill="#7fb0d8"/><ellipse cx="5.5" cy="6.500" rx="2.500" ry="3.300" fill="#f0c8a8"/><path d="M2.8 6c0-2.800 1-4 2.700-4s2.700 1.200 2.700 4c-.6-1.500-1.300-2-2.700-2s-2.100.5-2.700 2z" fill="#6b5a50"/><path d="M12 11c-.8-4 0-9.500 3.500-9.500S19.800 7 19 11z" fill="#d9bf8c"/><path d="M11.0 18v-4c0-2 1.500-3 3-3.300h3c1.500.300 3 1.300 3 3.300v4z" fill="#f7f7f7" stroke="#bcbcbc" stroke-width=".5"/><path d="M14.5 10.800l1 3 1-3z" fill="#e9a0a8"/><ellipse cx="15.5" cy="6.500" rx="2.500" ry="3.300" fill="#f0c8a8"/><path d="M12.8 6c0-2.800 1-4 2.700-4s2.700 1.200 2.700 4c-.6-1.500-1.300-2-2.700-2s-2.100.5-2.700 2z" fill="#d9bf8c"/></svg>
<svg style="left:57.7px;top:378.3px" width="9" height="9" viewBox="0 0 9 9"><path d="M8 1.300v6.800H1.200z" fill="#6a6a6a" stroke="#161616" stroke-width="1" stroke-linejoin="round"/></svg>
<span class="t" style="left:71.6px;top:362.5px;line-height:20px;font-size:16px;font-weight:700;letter-spacing:0.53px;">Консультации и повторные</span>
<span class="t" style="left:71.6px;top:383.75px;line-height:20px;font-size:16px;font-weight:700;letter-spacing:0.85px;">приемы</span>
<svg style="left:76.6px;top:409px" width="18" height="36" viewBox="0 0 18 36"><defs><linearGradient id="gbm" x1="0" y1="0" x2="0" y2="1"><stop offset="0" stop-color="#fcbf0c"/><stop offset=".35" stop-color="#fcc622"/><stop offset="1" stop-color="#fee993"/></linearGradient></defs><path d="M0 0h17.800v35.800l-8.900-8.200-8.900 8.200z" fill="url(#gbm)"/><rect x="0" y="0" width="17.800" height="2" fill="#f8a92a"/><g transform="translate(8.800 18.200) rotate(47)"><rect x="-1.800" y="-7.300" width="3.600" height="10" fill="#f7d23e" stroke="#c79a1c" stroke-width=".45"/><rect x="-.5" y="-4" width="1" height="6.500" fill="#fbe88a"/><rect x="-1.800" y="-7.300" width="3.600" height="1.500" fill="#e76f6f"/><rect x="-1.800" y="-5.800" width="3.600" height="1.600" fill="#b4b8bc"/><path d="M-1.800 2.700h3.600L0 6.300z" fill="#f2c9a0"/><path d="M-.9 4.500h1.800L0 6.500z" fill="#c2321e"/></g></svg>
<svg style="left:61.7px;top:439.8px" width="9" height="9" viewBox="0 0 9 9"><path d="M8 1.300v6.800H1.200z" fill="#6a6a6a" stroke="#161616" stroke-width="1" stroke-linejoin="round"/></svg>
<span class="t" style="left:98.35px;top:414px;line-height:21px;font-size:16.5px;letter-spacing:0.24px;">Консультация</span>
<span class="t" style="left:98.35px;top:434px;line-height:21px;font-size:16.5px;letter-spacing:0.14px;">отолариногола (10.03.2023</span>
<span class="t" style="left:98.35px;top:454.5px;line-height:21px;font-size:16.5px;letter-spacing:-0.12px;">19:31)</span>
<span class="t" style="left:80.85px;top:485px;line-height:21px;font-size:16.5px;letter-spacing:0.25px;">Жалобы/анамнез</span>
<span class="t" style="left:80.85px;top:512.75px;line-height:21px;font-size:16.5px;letter-spacing:0.26px;">Объективные данные</span>
<span class="t" style="left:80.85px;top:541.5px;line-height:21px;font-size:16.5px;letter-spacing:0.51px;">Диагноз</span>
<span class="t" style="left:80.85px;top:570px;line-height:21px;font-size:16.5px;letter-spacing:0.38px;">Заключение</span>
<span class="t" style="left:80.85px;top:597.75px;line-height:21px;font-size:16.5px;letter-spacing:0.26px;">Назначения</span>
<svg style="left:76.6px;top:624px" width="18" height="36" viewBox="0 0 18 36"><defs><linearGradient id="gbm" x1="0" y1="0" x2="0" y2="1"><stop offset="0" stop-color="#fcbf0c"/><stop offset=".35" stop-color="#fcc622"/><stop offset="1" stop-color="#fee993"/></linearGradient></defs><path d="M0 0h17.800v35.800l-8.900-8.200-8.900 8.200z" fill="url(#gbm)"/><rect x="0" y="0" width="17.800" height="2" fill="#f8a92a"/><g transform="translate(8.800 18.200) rotate(47)"><rect x="-1.800" y="-7.300" width="3.600" height="10" fill="#f7d23e" stroke="#c79a1c" stroke-width=".45"/><rect x="-.5" y="-4" width="1" height="6.500" fill="#fbe88a"/><rect x="-1.800" y="-7.300" width="3.600" height="1.500" fill="#e76f6f"/><rect x="-1.800" y="-5.800" width="3.600" height="1.600" fill="#b4b8bc"/><path d="M-1.800 2.700h3.600L0 6.300z" fill="#f2c9a0"/><path d="M-.9 4.500h1.800L0 6.500z" fill="#c2321e"/></g></svg>
<svg style="left:61.7px;top:639.8px" width="9" height="9" viewBox="0 0 9 9"><path d="M8 1.300v6.800H1.200z" fill="#6a6a6a" stroke="#161616" stroke-width="1" stroke-linejoin="round"/></svg>
<span class="t" style="left:98.35px;top:634px;line-height:21px;font-size:16.5px;letter-spacing:-0.21px;">ЭКГ (10.03.2023 19:32)</span>
<span class="t" style="left:80.85px;top:667.75px;line-height:21px;font-size:16.5px;letter-spacing:0.11px;">Ход исследования</span>
<span class="t" style="left:80.85px;top:695.75px;line-height:21px;font-size:16.5px;letter-spacing:0.38px;">Заключение</span>
<svg style="left:25px;top:735px" width="18" height="19" viewBox="0 0 18 19"><rect x=".3" y=".3" width="11.500" height="13.500" rx="1.200" fill="#c3c3c7"/><g fill="#e98a7c"><circle cx="2.4" cy="2.3" r="1.350"/><circle cx="2.4" cy="5.5" r="1.350"/><circle cx="2.4" cy="8.7" r="1.350"/><circle cx="2.4" cy="11.900000000000002" r="1.350"/><circle cx="5.8" cy="2.3" r="1.350"/><circle cx="5.8" cy="5.5" r="1.350"/><circle cx="5.8" cy="8.7" r="1.350"/><circle cx="5.8" cy="11.900000000000002" r="1.350"/><circle cx="9.2" cy="2.3" r="1.350"/><circle cx="9.2" cy="5.5" r="1.350"/><circle cx="9.2" cy="8.7" r="1.350"/><circle cx="9.2" cy="11.900000000000002" r="1.350"/></g><circle cx="2.400" cy="2.300" r="1.200" fill="#f4f4f6" stroke="#6f7278" stroke-width=".5"/><circle cx="2.400" cy="5.500" r="1.200" fill="#f4f4f6" stroke="#6f7278" stroke-width=".5"/><g transform="rotate(-38 13 8.300)"><rect x="8.800" y="6.200" width="8.600" height="4.300" rx="2.150" fill="#f3f3f3" stroke="#c9c9c9" stroke-width=".5"/></g><path d="M8.500 11l2.500-1.600 1 1.200-2.300 1.500z" fill="#4f6fd0"/><rect x="1.600" y="12.300" width="13.600" height="5.400" rx="2.700" fill="#f5f5f5" stroke="#bdbdbd" stroke-width=".5"/><path d="M8.600 12.300h3.900a2.700 2.700 0 0 1 0 5.400H8.600z" fill="#e23b2c"/><rect x="3" y="13.200" width="9.500" height="1.200" rx=".6" fill="#fff" opacity=".55"/></svg>
<svg style="left:57.7px;top:741.3px" width="9" height="9" viewBox="0 0 9 9"><path d="M8 1.300v6.800H1.200z" fill="#6a6a6a" stroke="#161616" stroke-width="1" stroke-linejoin="round"/></svg>
<span class="t" style="left:71.6px;top:735.5px;line-height:20px;font-size:16px;font-weight:700;color:#0c3a66;letter-spacing:0.49px;">Основной лист назначений</span>
<span class="t" style="left:75.85px;top:763.25px;line-height:21px;font-size:16.5px;letter-spacing:0.23px;">Консультации и исследования</span>
<span class="t" style="left:75.85px;top:790.75px;line-height:21px;font-size:16.5px;letter-spacing:0.46px;">Лечебные процедуры</span>
<span class="t" style="left:71.6px;top:828.75px;line-height:20px;font-size:16px;font-weight:700;letter-spacing:0.43px;">Сводная таблица</span>
<span class="t" style="left:71.6px;top:849.5px;line-height:20px;font-size:16px;font-weight:700;letter-spacing:0.4px;">исследований</span>
<svg style="left:22.9px;top:884px" width="22" height="17" viewBox="0 0 22 17"><defs><linearGradient id="gl5" x1="0" y1="0" x2="0" y2="1"><stop offset="0" stop-color="#d3e0e6"/><stop offset=".75" stop-color="#a9bec9"/><stop offset="1" stop-color="#6f8b99"/></linearGradient></defs><rect x="0" y="0" width="20.200" height="16" fill="url(#gl5)"/><rect x="2.300" y="2" width="15.600" height="11.300" fill="#e8eff3"/><path d="M3.300 9.800l2.200-2.600 1.700-1 1.500 1 1.700-1.800 1.200.4 1.200 3" stroke="#f0532c" stroke-width="1.200" fill="none" stroke-linejoin="round"/><path d="M3.500 12.300l5.500-3 3 1.700-2.500 1.300z" fill="#f7f9fb"/><rect x="15.200" y="9.300" width="1.500" height="1.500" fill="#f0b93a"/><path d="M20.700 2.300L9.800 13.300" stroke="#8f9498" stroke-width="2.600" stroke-linecap="round"/><path d="M20.700 2.300L10.500 12.600" stroke="#e6dfe2" stroke-width="1.500" stroke-linecap="round"/></svg>
<svg style="left:57.7px;top:888.3px" width="9" height="9" viewBox="0 0 9 9"><path d="M8 1.300v6.800H1.200z" fill="#6a6a6a" stroke="#161616" stroke-width="1" stroke-linejoin="round"/></svg>
<span class="t" style="left:71.6px;top:882.5px;line-height:20px;font-size:16px;font-weight:700;letter-spacing:0.73px;">Измеряемые параметры</span>
<span class="t" style="left:75.85px;top:911px;line-height:21px;font-size:16.5px;letter-spacing:-0.54px;">Вес</span>
<span class="t" style="left:75.85px;top:938.25px;line-height:21px;font-size:16.5px;letter-spacing:0.15px;">Температура</span>
<svg style="left:372.5px;top:168px" width="38" height="37" viewBox="0 0 38 37"><rect x="0" y="1" width="37.400" height="27" fill="#2f343a" opacity=".5"/><rect x=".4" y=".4" width="36.600" height="26.500" fill="#f1f6f9"/><rect x=".4" y=".4" width="36.600" height="4.500" fill="#fccbc3"/><rect x="5.500" y="2.800" width="25" height="1.300" fill="#c79a94"/><rect x="4.500" y="6.800" width="4.500" height="1.600" fill="#b9c0c8"/><rect x="10.500" y="6.800" width="5" height="1.600" fill="#b9c0c8"/><rect x="4.500" y="9.800" width="9" height="1" fill="#9aa2ab"/><rect x="21.500" y="6.300" width="13.500" height="5" fill="#fafcfd" stroke="#c3cbd3" stroke-width=".7"/><path d="M23 9h2M26.500 9h2M30 9h3.500" stroke="#9aa3ad" stroke-width=".9"/><path d="M25.500 21.500l3-2.500 2.500 1.500 2-1 2 2z" fill="#8db8e0"/><path d="M25 22h10.500" stroke="#9aa3ad" stroke-width=".7"/><path d="M4 13.500h3M4 16.500h3M4 19.500h3M16 16.500h5M16 19.500h4" stroke="#aab3bb" stroke-width=".8"/><ellipse cx="12.800" cy="17.500" rx="6.300" ry="7" fill="none" stroke="#8d9ca6" stroke-width="2.600" stroke-dasharray="2.600 .9" transform="rotate(-28 12.800 17.500)"/><path d="M11 24c3 3 5 3.500 6.500 3 0 4.500 2.500 7.500 6 7.500 4 0 5.500-3.500 4.500-8-1-4-3.500-7-1-10.500" fill="none" stroke="#33383d" stroke-width="1.700" stroke-linecap="round"/><circle cx="28.800" cy="14.300" r="3.900" fill="#76838c" stroke="#4d565e" stroke-width=".8"/><path d="M26.800 13.500l3.500-2.300" stroke="#dfe8ee" stroke-width="1.400" stroke-linecap="round"/></svg>
<span class="t" style="left:417.6px;top:172.75px;line-height:27px;font-size:21.5px;color:#fff;letter-spacing:0.47px;">Основной лист назначений</span>
<div style="left:364px;top:216px;width:1675.5px;height:756px;background:#fdfdfd;border:1px solid #f6f6f6;"></div>
<div style="left:366px;top:218px;width:1672px;height:754px;background:#ededed;border:1px solid #c6c7cb;border-bottom:0;"></div>
<div style="left:368px;top:220px;width:1668px;height:77px;background:#f9f9f9;border:1px solid #b8b8b8;"></div>
<div style="left:368px;top:300px;width:1668px;height:385px;background:#f9f9f9;border:1px solid #b8b8b8;"></div>
<div style="left:368px;top:687px;width:1668px;height:288px;background:#f9f9f9;border:1px solid #b8b8b8;"></div>
<div style="left:2047px;top:164px;width:20px;height:805px;background:#f1f1f1;"></div>
<div style="left:2047px;top:164px;width:20px;height:453px;background:#c9c9c9;"></div>
<span class="t" style="left:375.85px;top:227.5px;line-height:20px;font-size:16px;font-weight:700;letter-spacing:0.69px;">Лечебные программы</span>
<div class="ib" style="left:378px;top:256.25px;width:328.75px;height:30.5px;background:#5fa27c"></div>
<span class="t" style="left:401.6px;top:260.75px;line-height:21px;font-size:16.5px;color:#fff;letter-spacing:0.39px;">Назначить из лечебной программы</span>
<div class="ib" style="left:712.75px;top:256.25px;width:224px;height:30.5px;background:#5fa27c"></div>
<span class="t" style="left:720.1px;top:260.75px;line-height:21px;font-size:16.5px;color:#fff;letter-spacing:0.36px;">Добавить программу в ИБ</span>
<span class="t" style="left:375.85px;top:307.5px;line-height:20px;font-size:16px;font-weight:700;letter-spacing:0.41px;">Консультации и исследования</span>
<div class="" style="left:381px;top:340.25px;width:100.75px;height:29.5px;background:#5fa27c"></div>
<span class="t" style="left:393.85px;top:344.2px;line-height:21px;font-size:16.5px;color:#fff;letter-spacing:0.33px;">Добавить</span>
<div class="ib" style="left:488px;top:340.25px;width:135.75px;height:29.5px;background:#7c8da6"></div>
<span class="t" style="left:495.35px;top:344.2px;line-height:21px;font-size:16.5px;color:#b7c1cf;letter-spacing:0.32px;">Приостановить</span>
<div class="ib" style="left:628.75px;top:340.25px;width:118px;height:29.5px;background:#7c8da6"></div>
<span class="t" style="left:636.6px;top:344.2px;line-height:21px;font-size:16.5px;color:#b7c1cf;letter-spacing:0.35px;">Возобновить</span>
<div class="ib" style="left:751.75px;top:340.25px;width:104.75px;height:29.5px;background:#7c8da6"></div>
<span class="t" style="left:765.85px;top:344.2px;line-height:21px;font-size:16.5px;color:#b7c1cf;letter-spacing:0.18px;">Отменить</span>
<div class="ib" style="left:863px;top:340.25px;width:160.75px;height:29.5px;background:#7c8da6"></div>
<span class="t" style="left:870.1px;top:344.2px;line-height:21px;font-size:16.5px;color:#b7c1cf;letter-spacing:0.34px;">Диспетчеризовать</span>
<div class="ib" style="left:1029px;top:340.25px;width:104.75px;height:29.5px;background:#7c8da6"></div>
<span class="t" style="left:1050.1px;top:344.2px;line-height:21px;font-size:16.5px;color:#b7c1cf;letter-spacing:-0.06px;">Удалить</span>
<div style="left:376px;top:377px;width:1652px;height:300px;background:#f5f5f5;border:1px solid #c9cbdd;"></div>
<div style="left:1273.25px;top:378px;width:105px;height:47px;background:#faf0c0;"></div>
<div style="left:405.5px;top:456.25px;width:1621.5px;height:41.25px;background:#fff;"></div>
<div style="left:405.5px;top:497.5px;width:1621.5px;height:41.25px;background:#fff;"></div>
<div style="left:405.5px;top:538.75px;width:1621.5px;height:40.75px;background:#fff;"></div>
<div style="left:405.5px;top:611.25px;width:1621.5px;height:40.75px;background:#fff;"></div>
<div style="left:404.9px;top:377.5px;width:1.2px;height:47.75px;background:#c9cbdd;"></div>
<div style="left:459.9px;top:377.5px;width:1.2px;height:47.75px;background:#c9cbdd;"></div>
<div style="left:890.65px;top:377.5px;width:1.2px;height:47.75px;background:#c9cbdd;"></div>
<div style="left:1048.65px;top:377.5px;width:1.2px;height:47.75px;background:#c9cbdd;"></div>
<div style="left:1114.65px;top:377.5px;width:1.2px;height:47.75px;background:#c9cbdd;"></div>
<div style="left:1272.65px;top:377.5px;width:1.2px;height:47.75px;background:#c9cbdd;"></div>
<div style="left:1377.65px;top:377.5px;width:1.2px;height:47.75px;background:#c9cbdd;"></div>
<div style="left:1508.65px;top:377.5px;width:1.2px;height:47.75px;background:#c9cbdd;"></div>
<div style="left:1627.65px;top:377.5px;width:1.2px;height:47.75px;background:#c9cbdd;"></div>
<div style="left:1785.65px;top:377.5px;width:1.2px;height:47.75px;background:#c9cbdd;"></div>
<div style="left:404.9px;top:456.25px;width:1.2px;height:41.25px;background:#c9cbdd;"></div>
<div style="left:459.9px;top:456.25px;width:1.2px;height:41.25px;background:#c9cbdd;"></div>
<div style="left:890.65px;top:456.25px;width:1.2px;height:41.25px;background:#c9cbdd;"></div>
<div style="left:1048.65px;top:456.25px;width:1.2px;height:41.25px;background:#c9cbdd;"></div>
<div style="left:1114.65px;top:456.25px;width:1.2px;height:41.25px;background:#c9cbdd;"></div>
<div style="left:1272.65px;top:456.25px;width:1.2px;height:41.25px;background:#c9cbdd;"></div>
<div style="left:1377.65px;top:456.25px;width:1.2px;height:41.25px;background:#c9cbdd;"></div>
<div style="left:1508.65px;top:456.25px;width:1.2px;height:41.25px;background:#c9cbdd;"></div>
<div style="left:1627.65px;top:456.25px;width:1.2px;height:41.25px;background:#c9cbdd;"></div>
<div style="left:1785.65px;top:456.25px;width:1.2px;height:41.25px;background:#c9cbdd;"></div>
<div style="left:404.9px;top:497.5px;width:1.2px;height:41.25px;background:#c9cbdd;"></div>
<div style="left:459.9px;top:497.5px;width:1.2px;height:41.25px;background:#c9cbdd;"></div>
<div style="left:890.65px;top:497.5px;width:1.2px;height:41.25px;background:#c9cbdd;"></div>
<div style="left:1048.65px;top:497.5px;width:1.2px;height:41.25px;background:#c9cbdd;"></div>
<div style="left:1114.65px;top:497.5px;width:1.2px;height:41.25px;background:#c9cbdd;"></div>
<div style="left:1272.65px;top:497.5px;width:1.2px;height:41.25px;background:#c9cbdd;"></div>
<div style="left:1377.65px;top:497.5px;width:1.2px;height:41.25px;background:#c9cbdd;"></div>
<div style="left:1508.65px;top:497.5px;width:1.2px;height:41.25px;background:#c9cbdd;"></div>
<div style="left:1627.65px;top:497.5px;width:1.2px;height:41.25px;background:#c9cbdd;"></div>
<div style="left:1785.65px;top:497.5px;width:1.2px;height:41.25px;background:#c9cbdd;"></div>
<div style="left:404.9px;top:538.75px;width:1.2px;height:40.75px;background:#c9cbdd;"></div>
<div style="left:459.9px;top:538.75px;width:1.2px;height:40.75px;background:#c9cbdd;"></div>
<div style="left:890.65px;top:538.75px;width:1.2px;height:40.75px;background:#c9cbdd;"></div>
<div style="left:1048.65px;top:538.75px;width:1.2px;height:40.75px;background:#c9cbdd;"></div>
<div style="left:1114.65px;top:538.75px;width:1.2px;height:40.75px;background:#c9cbdd;"></div>
<div style="left:1272.65px;top:538.75px;width:1.2px;height:40.75px;background:#c9cbdd;"></div>
<div style="left:1377.65px;top:538.75px;width:1.2px;height:40.75px;background:#c9cbdd;"></div>
<div style="left:1508.65px;top:538.75px;width:1.2px;height:40.75px;background:#c9cbdd;"></div>
<div style="left:1627.65px;top:538.75px;width:1.2px;height:40.75px;background:#c9cbdd;"></div>
<div style="left:1785.65px;top:538.75px;width:1.2px;height:40.75px;background:#c9cbdd;"></div>
<div style="left:404.9px;top:611.25px;width:1.2px;height:40.75px;background:#c9cbdd;"></div>
<div style="left:459.9px;top:611.25px;width:1.2px;height:40.75px;background:#c9cbdd;"></div>
<div style="left:890.65px;top:611.25px;width:1.2px;height:40.75px;background:#c9cbdd;"></div>
<div style="left:1048.65px;top:611.25px;width:1.2px;height:40.75px;background:#c9cbdd;"></div>
<div style="left:1114.65px;top:611.25px;width:1.2px;height:40.75px;background:#c9cbdd;"></div>
<div style="left:1272.65px;top:611.25px;width:1.2px;height:40.75px;background:#c9cbdd;"></div>
<div style="left:1377.65px;top:611.25px;width:1.2px;height:40.75px;background:#c9cbdd;"></div>
<div style="left:1508.65px;top:611.25px;width:1.2px;height:40.75px;background:#c9cbdd;"></div>
<div style="left:1627.65px;top:611.25px;width:1.2px;height:40.75px;background:#c9cbdd;"></div>
<div style="left:1785.65px;top:611.25px;width:1.2px;height:40.75px;background:#c9cbdd;"></div>
<div style="left:376.25px;top:424.65px;width:1651.75px;height:1.2px;background:#c9cbdd;"></div>
<div style="left:405.5px;top:455.65px;width:1622.5px;height:1.2px;background:#c9cbdd;"></div>
<div style="left:405.5px;top:496.9px;width:1622.5px;height:1.2px;background:#c9cbdd;"></div>
<div style="left:405.5px;top:651.4px;width:1622.5px;height:1.2px;background:#c9cbdd;"></div>
<div style="left:405.5px;top:610.65px;width:1622.5px;height:1.2px;background:#c9cbdd;"></div>
<div style="left:405.5px;top:537.75px;width:1622.5px;height:2px;background:#c9cbdd;"></div>
<div style="left:376.25px;top:578.5px;width:1651.75px;height:2px;background:#c9cbdd;"></div>
<span class="t" style="left:466.6px;top:391.5px;line-height:20px;font-size:16px;font-weight:700;letter-spacing:0.69px;">Назначение</span>
<span class="t" style="left:897.1px;top:391.5px;line-height:20px;font-size:16px;font-weight:700;letter-spacing:0.61px;">К врачу</span>
<span class="t" style="left:1055.1px;top:391.5px;line-height:20px;font-size:16px;font-weight:700;letter-spacing:-0.07px;">Cito?</span>
<span class="t" style="left:1120.85px;top:391.5px;line-height:20px;font-size:16px;font-weight:700;letter-spacing:0.62px;">Назначил</span>
<span class="t" style="left:1278.85px;top:391.5px;line-height:20px;font-size:16px;font-weight:700;letter-spacing:0.56px;">Дата</span>
<span class="t" style="left:1515.85px;top:391.5px;line-height:20px;font-size:16px;font-weight:700;letter-spacing:0.86px;">Цена</span>
<span class="t" style="left:1634.6px;top:391.5px;line-height:20px;font-size:16px;font-weight:700;letter-spacing:0.81px;">Инициатор</span>
<span class="t" style="left:1383.85px;top:380.5px;line-height:20px;font-size:16px;font-weight:700;letter-spacing:0.32px;">Способ</span>
<span class="t" style="left:1383.85px;top:401.5px;line-height:20px;font-size:16px;font-weight:700;letter-spacing:0.42px;">оплаты</span>
<div style="left:1790px;top:379px;width:237px;height:45px;overflow:hidden;"><span class="t" style="left:2.2px;top:1.5px;line-height:20px;font-size:16px;font-weight:700;letter-spacing:.55px">Комментарий (цель исследования</span><span class="t" style="left:2.2px;top:22px;line-height:20px;font-size:16px;font-weight:700;letter-spacing:.55px">консультации)</span></div>
<svg style="left:1320.5px;top:381.5px" width="12" height="8"><path d="M6 0l3.200 4.500H11.500V7H.5V4.500h2.300z" fill="#111"/></svg>
<svg style="left:388px;top:439.5px" width="8" height="5"><path d="M4 0l3.700 4.500H.3z" fill="#767676"/></svg>
<span class="t" style="left:405.85px;top:431.25px;line-height:20px;font-size:16px;font-weight:700;letter-spacing:0.47px;">Консультации</span>
<svg style="left:388px;top:594.5px" width="8" height="5"><path d="M4 0l3.700 4.500H.3z" fill="#767676"/></svg>
<span class="t" style="left:405.85px;top:586.25px;line-height:20px;font-size:16px;font-weight:700;letter-spacing:0.42px;">Инструментальные исследования</span>
<svg style="left:419.8px;top:473.2px" width="26" height="10" viewBox="0 0 26 10"><defs><linearGradient id="gpg" x1="0" y1="0" x2="0" y2="1"><stop offset="0" stop-color="#0a9a18"/><stop offset="1" stop-color="#08cf38"/></linearGradient><linearGradient id="gpe" x1="0" y1="0" x2="0" y2="1"><stop offset="0" stop-color="#cdcdcd"/><stop offset="1" stop-color="#e8e8e8"/></linearGradient></defs><rect x="0" y="0" width="6.1" height="9.800" fill="url(#gpg)"/><rect x="7.1" y="0" width="5.2" height="9.800" fill="url(#gpe)"/><rect x="14" y="0" width="5.2" height="9.800" fill="url(#gpe)"/><rect x="20.2" y="0" width="4.8" height="9.800" fill="url(#gpe)"/></svg>
<span class="t" style="left:472.85px;top:467px;line-height:21px;font-size:16.5px;letter-spacing:0.4px;">Первичный осмотр лечащего врача</span>
<svg style="left:867.5px;top:469.2px" width="18" height="17" viewBox="0 0 18 17"><defs><radialGradient id="gbb" cx=".55" cy=".5" r=".6"><stop offset="0" stop-color="#d3e3f9"/><stop offset=".6" stop-color="#e4eefb"/><stop offset="1" stop-color="#fff"/></radialGradient></defs><path d="M4.500 1.300h8.300a3.200 3.200 0 0 1 3.200 3.200v3.600a3.200 3.200 0 0 1-3.200 3.200h-1.300c-1.500 2-3.500 3.300-5.700 4 1-1.200 1.500-2.600 1.500-4H4.500a3.200 3.200 0 0 1-3.200-3.200V4.500a3.200 3.200 0 0 1 3.200-3.200z" fill="url(#gbb)" stroke="#7aa3cf" stroke-width="1.700" stroke-linejoin="round"/><rect x="3.300" y="3.300" width="10.700" height="1.600" fill="#fff" opacity=".9"/></svg>
<span class="t" style="left:897.1px;top:467px;line-height:21px;font-size:16.5px;letter-spacing:0px;">Иванова А.С.</span>
<div style="left:1065px;top:465px;width:30.75px;height:25.5px;background:#fff;border:1px solid #d2d2d2;"></div>
<span class="t" style="left:1067.1px;top:466.5px;line-height:21px;font-size:16.5px;color:#8c8c8c;letter-spacing:0.42px;">нет</span>
<span class="t" style="left:1120.85px;top:467px;line-height:21px;font-size:16.5px;letter-spacing:-0.01px;">Лебедева О.Н.</span>
<span class="t" style="left:1279.6px;top:467px;line-height:21px;font-size:16.5px;letter-spacing:-0.23px;">10.03.2023</span>
<span class="t" style="left:1402.6px;top:457px;line-height:21px;font-size:16.5px;letter-spacing:0.07px;">Оплата из</span>
<span class="t" style="left:1402.6px;top:477px;line-height:21px;font-size:16.5px;letter-spacing:0.57px;">программы</span>
<span class="t" style="left:1559.6px;top:467px;line-height:21px;font-size:16.5px;letter-spacing:0.02px;">800,00 <span class="rub">₽</span></span>
<span class="t" style="left:1633.85px;top:467px;line-height:21px;font-size:16.5px;letter-spacing:0.01px;">Лебедева О.Н.</span>
<svg style="left:419.8px;top:513.95px" width="26" height="10" viewBox="0 0 26 10"><defs><linearGradient id="gpg" x1="0" y1="0" x2="0" y2="1"><stop offset="0" stop-color="#0a9a18"/><stop offset="1" stop-color="#08cf38"/></linearGradient><linearGradient id="gpe" x1="0" y1="0" x2="0" y2="1"><stop offset="0" stop-color="#cdcdcd"/><stop offset="1" stop-color="#e8e8e8"/></linearGradient></defs><rect x="0" y="0" width="6.1" height="9.800" fill="url(#gpg)"/><rect x="7.1" y="0" width="5.2" height="9.800" fill="url(#gpg)"/><rect x="14" y="0" width="5.2" height="9.800" fill="url(#gpg)"/><rect x="20.2" y="0" width="4.8" height="9.800" fill="url(#gpe)"/></svg>
<svg style="left:465.5px;top:508.25px" width="22" height="22" viewBox="0 0 22 22"><defs><linearGradient id="ged" x1="0" y1="0" x2="1" y2="1"><stop offset="0" stop-color="#fbc520"/><stop offset="1" stop-color="#fde27a"/></linearGradient></defs><rect x="1.700" y="1.700" width="19.800" height="20" rx="2.500" fill="#dcdcdc" opacity=".75"/><rect x=".4" y=".4" width="19.800" height="20" rx="2.500" fill="url(#ged)"/><g transform="translate(10.200 10.300) rotate(45)"><rect x="-1.800" y="-7.300" width="3.600" height="10" fill="#f7d23e" stroke="#c79a1c" stroke-width=".45"/><rect x="-.5" y="-4" width="1" height="6.500" fill="#fbe88a"/><rect x="-1.800" y="-7.300" width="3.600" height="1.500" fill="#e76f6f"/><rect x="-1.800" y="-5.800" width="3.600" height="1.600" fill="#b4b8bc"/><path d="M-1.800 2.700h3.600L0 6.300z" fill="#f2c9a0"/><path d="M-.9 4.500h1.800L0 6.500z" fill="#c2321e"/></g></svg>
<span class="t" style="left:500.85px;top:507.75px;line-height:21px;font-size:16.5px;letter-spacing:0.32px;">Консультация отолариногола</span>
<svg style="left:867.5px;top:509.95px" width="18" height="17" viewBox="0 0 18 17"><defs><radialGradient id="gbb" cx=".55" cy=".5" r=".6"><stop offset="0" stop-color="#d3e3f9"/><stop offset=".6" stop-color="#e4eefb"/><stop offset="1" stop-color="#fff"/></radialGradient></defs><path d="M4.500 1.300h8.300a3.200 3.200 0 0 1 3.200 3.200v3.600a3.200 3.200 0 0 1-3.200 3.200h-1.300c-1.500 2-3.500 3.300-5.700 4 1-1.200 1.500-2.600 1.500-4H4.500a3.200 3.200 0 0 1-3.200-3.200V4.500a3.200 3.200 0 0 1 3.200-3.200z" fill="url(#gbb)" stroke="#7aa3cf" stroke-width="1.700" stroke-linejoin="round"/><rect x="3.300" y="3.300" width="10.700" height="1.600" fill="#fff" opacity=".9"/></svg>
<span class="t" style="left:897.1px;top:507.75px;line-height:21px;font-size:16.5px;letter-spacing:0px;">Иванова А.С.</span>
<div style="left:1065px;top:505.75px;width:30.75px;height:25.5px;background:#f3f3f3;border:1px solid #d2d2d2;"></div>
<span class="t" style="left:1067.1px;top:507.25px;line-height:21px;font-size:16.5px;color:#8c8c8c;letter-spacing:0.42px;">нет</span>
<span class="t" style="left:1120.85px;top:507.75px;line-height:21px;font-size:16.5px;letter-spacing:0px;">Иванова А.С.</span>
<span class="t" style="left:1279.6px;top:507.75px;line-height:21px;font-size:16.5px;letter-spacing:-0.23px;">10.03.2023</span>
<div style="left:1384px;top:512.25px;width:13px;height:13px;background:#f00000;border-radius:50%;"></div>
<span class="t" style="left:1402.6px;top:497.75px;line-height:21px;font-size:16.5px;letter-spacing:-0.08px;">Оплата</span>
<span class="t" style="left:1402.6px;top:517.75px;line-height:21px;font-size:16.5px;letter-spacing:0.43px;">пациентом</span>
<span class="t" style="left:1546.6px;top:507.75px;line-height:21px;font-size:16.5px;letter-spacing:-0.06px;">1 200,00 <span class="rub">₽</span></span>
<span class="t" style="left:1633.85px;top:507.75px;line-height:21px;font-size:16.5px;letter-spacing:0px;">Иванова А.С.</span>
<svg style="left:419.8px;top:555.2px" width="26" height="10" viewBox="0 0 26 10"><defs><linearGradient id="gpg" x1="0" y1="0" x2="0" y2="1"><stop offset="0" stop-color="#0a9a18"/><stop offset="1" stop-color="#08cf38"/></linearGradient><linearGradient id="gpe" x1="0" y1="0" x2="0" y2="1"><stop offset="0" stop-color="#cdcdcd"/><stop offset="1" stop-color="#e8e8e8"/></linearGradient></defs><rect x="0" y="0" width="6.1" height="9.800" fill="url(#gpg)"/><rect x="7.1" y="0" width="5.2" height="9.800" fill="url(#gpg)"/><rect x="14" y="0" width="5.2" height="9.800" fill="url(#gpe)"/><rect x="20.2" y="0" width="4.8" height="9.800" fill="url(#gpe)"/></svg>
<span class="t" style="left:472.85px;top:549px;line-height:21px;font-size:16.5px;letter-spacing:0.15px;">Консультация офтальмолога</span>
<span class="t" style="left:897.1px;top:549px;line-height:21px;font-size:16.5px;letter-spacing:0px;">Иванова А.С.</span>
<div style="left:1065px;top:547px;width:30.75px;height:25.5px;background:#f3f3f3;border:1px solid #d2d2d2;"></div>
<span class="t" style="left:1067.1px;top:548.5px;line-height:21px;font-size:16.5px;color:#8c8c8c;letter-spacing:0.42px;">нет</span>
<span class="t" style="left:1120.85px;top:549px;line-height:21px;font-size:16.5px;letter-spacing:0px;">Иванова А.С.</span>
<span class="t" style="left:1279.6px;top:549px;line-height:21px;font-size:16.5px;letter-spacing:-0.23px;">10.03.2023</span>
<span class="t" style="left:1402.6px;top:539px;line-height:21px;font-size:16.5px;letter-spacing:0.07px;">Оплата из</span>
<span class="t" style="left:1402.6px;top:559px;line-height:21px;font-size:16.5px;letter-spacing:0.57px;">программы</span>
<span class="t" style="left:1546.6px;top:549px;line-height:21px;font-size:16.5px;letter-spacing:-0.06px;">1 200,00 <span class="rub">₽</span></span>
<span class="t" style="left:1633.85px;top:549px;line-height:21px;font-size:16.5px;letter-spacing:0px;">Иванова А.С.</span>
<svg style="left:419.8px;top:628.2px" width="26" height="10" viewBox="0 0 26 10"><defs><linearGradient id="gpg" x1="0" y1="0" x2="0" y2="1"><stop offset="0" stop-color="#0a9a18"/><stop offset="1" stop-color="#08cf38"/></linearGradient><linearGradient id="gpe" x1="0" y1="0" x2="0" y2="1"><stop offset="0" stop-color="#cdcdcd"/><stop offset="1" stop-color="#e8e8e8"/></linearGradient></defs><rect x="0" y="0" width="6.1" height="9.800" fill="url(#gpg)"/><rect x="7.1" y="0" width="5.2" height="9.800" fill="url(#gpg)"/><rect x="14" y="0" width="5.2" height="9.800" fill="url(#gpg)"/><rect x="20.2" y="0" width="4.8" height="9.800" fill="url(#gpe)"/></svg>
<svg style="left:465.5px;top:622.5px" width="22" height="22" viewBox="0 0 22 22"><defs><linearGradient id="ged" x1="0" y1="0" x2="1" y2="1"><stop offset="0" stop-color="#fbc520"/><stop offset="1" stop-color="#fde27a"/></linearGradient></defs><rect x="1.700" y="1.700" width="19.800" height="20" rx="2.500" fill="#dcdcdc" opacity=".75"/><rect x=".4" y=".4" width="19.800" height="20" rx="2.500" fill="url(#ged)"/><g transform="translate(10.200 10.300) rotate(45)"><rect x="-1.800" y="-7.300" width="3.600" height="10" fill="#f7d23e" stroke="#c79a1c" stroke-width=".45"/><rect x="-.5" y="-4" width="1" height="6.500" fill="#fbe88a"/><rect x="-1.800" y="-7.300" width="3.600" height="1.500" fill="#e76f6f"/><rect x="-1.800" y="-5.800" width="3.600" height="1.600" fill="#b4b8bc"/><path d="M-1.800 2.700h3.600L0 6.300z" fill="#f2c9a0"/><path d="M-.9 4.500h1.800L0 6.500z" fill="#c2321e"/></g></svg>
<span class="t" style="left:500.85px;top:622px;line-height:21px;font-size:16.5px;letter-spacing:-0.62px;">ЭКГ</span>
<svg style="left:867.5px;top:624.2px" width="18" height="17" viewBox="0 0 18 17"><defs><radialGradient id="gbb" cx=".55" cy=".5" r=".6"><stop offset="0" stop-color="#d3e3f9"/><stop offset=".6" stop-color="#e4eefb"/><stop offset="1" stop-color="#fff"/></radialGradient></defs><path d="M4.500 1.300h8.300a3.200 3.200 0 0 1 3.200 3.200v3.600a3.200 3.200 0 0 1-3.200 3.200h-1.300c-1.500 2-3.500 3.300-5.700 4 1-1.200 1.500-2.600 1.500-4H4.500a3.200 3.200 0 0 1-3.200-3.200V4.500a3.200 3.200 0 0 1 3.200-3.200z" fill="url(#gbb)" stroke="#7aa3cf" stroke-width="1.700" stroke-linejoin="round"/><rect x="3.300" y="3.300" width="10.700" height="1.600" fill="#fff" opacity=".9"/></svg>
<span class="t" style="left:897.1px;top:622px;line-height:21px;font-size:16.5px;letter-spacing:0px;">Иванова А.С.</span>
<div style="left:1065px;top:620px;width:30.75px;height:25.5px;background:#f3f3f3;border:1px solid #d2d2d2;"></div>
<span class="t" style="left:1067.1px;top:621.5px;line-height:21px;font-size:16.5px;color:#8c8c8c;letter-spacing:0.42px;">нет</span>
<span class="t" style="left:1120.85px;top:622px;line-height:21px;font-size:16.5px;letter-spacing:-0.01px;">Лебедева О.Н.</span>
<span class="t" style="left:1279.6px;top:622px;line-height:21px;font-size:16.5px;letter-spacing:-0.23px;">10.03.2023</span>
<span class="t" style="left:1402.6px;top:612px;line-height:21px;font-size:16.5px;letter-spacing:0.07px;">Оплата из</span>
<span class="t" style="left:1402.6px;top:632px;line-height:21px;font-size:16.5px;letter-spacing:0.57px;">программы</span>
<span class="t" style="left:1546.6px;top:622px;line-height:21px;font-size:16.5px;letter-spacing:-0.06px;">1 200,00 <span class="rub">₽</span></span>
<span class="t" style="left:1633.85px;top:622px;line-height:21px;font-size:16.5px;letter-spacing:0.01px;">Лебедева О.Н.</span>
<div style="left:398.75px;top:658.25px;width:1472px;height:11.25px;background:#cbcdda;"></div>
<svg style="left:384px;top:657px" width="9" height="14"><path d="M8 .5v13L.5 7z" fill="#5a5a5a"/></svg>
<svg style="left:2012px;top:657px" width="9" height="14"><path d="M1 .5v13L8.500 7z" fill="#5a5a5a"/></svg>
<span class="t" style="left:375.85px;top:695.5px;line-height:20px;font-size:16px;font-weight:700;letter-spacing:0.63px;">Лечебные процедуры</span>
<div class="ib" style="left:378px;top:724.25px;width:105.75px;height:29.5px;background:#5fa27c"></div>
<span class="t" style="left:392.85px;top:728.3px;line-height:21px;font-size:16.5px;color:#fff;letter-spacing:0.36px;">Добавить</span>
<div class="ib" style="left:489px;top:724.25px;width:135.75px;height:29.5px;background:#7c8da6"></div>
<span class="t" style="left:496.6px;top:728.3px;line-height:21px;font-size:16.5px;color:#b7c1cf;letter-spacing:0.3px;">Приостановить</span>
<div class="ib" style="left:630px;top:724.25px;width:117.75px;height:29.5px;background:#7c8da6"></div>
<span class="t" style="left:637.85px;top:728.3px;line-height:21px;font-size:16.5px;color:#b7c1cf;letter-spacing:0.35px;">Возобновить</span>
<div class="ib" style="left:753px;top:724.25px;width:104.5px;height:29.5px;background:#7c8da6"></div>
<span class="t" style="left:767.6px;top:728.3px;line-height:21px;font-size:16.5px;color:#b7c1cf;letter-spacing:0.11px;">Отменить</span>
<div class="ib" style="left:864.25px;top:724.25px;width:160.5px;height:29.5px;background:#7c8da6"></div>
<span class="t" style="left:871.35px;top:728.3px;line-height:21px;font-size:16.5px;color:#b7c1cf;letter-spacing:0.34px;">Диспетчеризовать</span>
<div class="ib" style="left:1030px;top:724.25px;width:104.75px;height:29.5px;background:#7c8da6"></div>
<span class="t" style="left:1051.1px;top:728.3px;line-height:21px;font-size:16.5px;color:#b7c1cf;letter-spacing:-0.06px;">Удалить</span>
<div class="ib" style="left:1141px;top:724.25px;width:282.75px;height:29.5px;background:#7c8da6"></div>
<span class="t" style="left:1147.85px;top:728.3px;line-height:21px;font-size:16.5px;color:#b7c1cf;letter-spacing:0.31px;">Продлить выбранные назначения</span>
<div style="left:1816px;top:730px;width:16.5px;height:16.5px;background:#fff;border:1px solid #cfcfcf;"></div>
<span class="t" style="left:1838.2px;top:727.5px;line-height:21px;font-size:16.5px;color:#1a1a1a;letter-spacing:0.23px;">Скрывать завершенные</span>
<div style="left:376px;top:757px;width:1279.25px;height:194px;background:#f5f5f5;border:1px solid #c9cbdd;"></div>
<div style="left:908.25px;top:758px;width:92px;height:36px;background:#faf0c0;"></div>
<div style="left:405.5px;top:825.75px;width:1248.75px;height:40.5px;background:#fff;"></div>
<div style="left:405.5px;top:866.25px;width:1248.75px;height:40.75px;background:#fff;"></div>
<div style="left:405.5px;top:907px;width:1248.75px;height:42.5px;background:#fff;"></div>
<div style="left:407px;top:910px;width:1247.25px;height:37px;background:#fbe36f;border:1px solid #f3cd4c;border-top-color:#f7ba2c;border-radius:2px;"></div>
<div style="left:404.9px;top:757.5px;width:1.2px;height:36.5px;background:#c9cbdd;"></div>
<div style="left:459.9px;top:757.5px;width:1.2px;height:36.5px;background:#c9cbdd;"></div>
<div style="left:788.4px;top:757.5px;width:1.2px;height:36.5px;background:#c9cbdd;"></div>
<div style="left:828.15px;top:757.5px;width:1.2px;height:36.5px;background:#c9cbdd;"></div>
<div style="left:867.9px;top:757.5px;width:1.2px;height:36.5px;background:#c9cbdd;"></div>
<div style="left:907.65px;top:757.5px;width:1.2px;height:36.5px;background:#c9cbdd;"></div>
<div style="left:999.65px;top:757.5px;width:1.2px;height:36.5px;background:#c9cbdd;"></div>
<div style="left:1196.65px;top:757.5px;width:1.2px;height:36.5px;background:#c9cbdd;"></div>
<div style="left:1328.65px;top:757.5px;width:1.2px;height:36.5px;background:#c9cbdd;"></div>
<div style="left:1486.65px;top:757.5px;width:1.2px;height:36.5px;background:#c9cbdd;"></div>
<div style="left:404.9px;top:825.75px;width:1.2px;height:40.5px;background:#c9cbdd;"></div>
<div style="left:459.9px;top:825.75px;width:1.2px;height:40.5px;background:#c9cbdd;"></div>
<div style="left:788.4px;top:825.75px;width:1.2px;height:40.5px;background:#c9cbdd;"></div>
<div style="left:828.15px;top:825.75px;width:1.2px;height:40.5px;background:#c9cbdd;"></div>
<div style="left:867.9px;top:825.75px;width:1.2px;height:40.5px;background:#c9cbdd;"></div>
<div style="left:907.65px;top:825.75px;width:1.2px;height:40.5px;background:#c9cbdd;"></div>
<div style="left:999.65px;top:825.75px;width:1.2px;height:40.5px;background:#c9cbdd;"></div>
<div style="left:1196.65px;top:825.75px;width:1.2px;height:40.5px;background:#c9cbdd;"></div>
<div style="left:1328.65px;top:825.75px;width:1.2px;height:40.5px;background:#c9cbdd;"></div>
<div style="left:1486.65px;top:825.75px;width:1.2px;height:40.5px;background:#c9cbdd;"></div>
<div style="left:404.9px;top:866.25px;width:1.2px;height:40.75px;background:#c9cbdd;"></div>
<div style="left:459.9px;top:866.25px;width:1.2px;height:40.75px;background:#c9cbdd;"></div>
<div style="left:788.4px;top:866.25px;width:1.2px;height:40.75px;background:#c9cbdd;"></div>
<div style="left:828.15px;top:866.25px;width:1.2px;height:40.75px;background:#c9cbdd;"></div>
<div style="left:867.9px;top:866.25px;width:1.2px;height:40.75px;background:#c9cbdd;"></div>
<div style="left:907.65px;top:866.25px;width:1.2px;height:40.75px;background:#c9cbdd;"></div>
<div style="left:999.65px;top:866.25px;width:1.2px;height:40.75px;background:#c9cbdd;"></div>
<div style="left:1196.65px;top:866.25px;width:1.2px;height:40.75px;background:#c9cbdd;"></div>
<div style="left:1328.65px;top:866.25px;width:1.2px;height:40.75px;background:#c9cbdd;"></div>
<div style="left:1486.65px;top:866.25px;width:1.2px;height:40.75px;background:#c9cbdd;"></div>
<div style="left:404.9px;top:907px;width:1.2px;height:42.5px;background:#c9cbdd;"></div>
<div style="left:459.9px;top:907px;width:1.2px;height:42.5px;background:#c9cbdd;"></div>
<div style="left:788.4px;top:907px;width:1.2px;height:42.5px;background:#c9cbdd;"></div>
<div style="left:828.15px;top:907px;width:1.2px;height:42.5px;background:#c9cbdd;"></div>
<div style="left:867.9px;top:907px;width:1.2px;height:42.5px;background:#c9cbdd;"></div>
<div style="left:907.65px;top:907px;width:1.2px;height:42.5px;background:#c9cbdd;"></div>
<div style="left:999.65px;top:907px;width:1.2px;height:42.5px;background:#c9cbdd;"></div>
<div style="left:1196.65px;top:907px;width:1.2px;height:42.5px;background:#c9cbdd;"></div>
<div style="left:1328.65px;top:907px;width:1.2px;height:42.5px;background:#c9cbdd;"></div>
<div style="left:1486.65px;top:907px;width:1.2px;height:42.5px;background:#c9cbdd;"></div>
<div style="left:376.25px;top:793.4px;width:1279px;height:1.2px;background:#c9cbdd;"></div>
<div style="left:405.5px;top:825.15px;width:1249.75px;height:1.2px;background:#c9cbdd;"></div>
<div style="left:405.5px;top:865.65px;width:1249.75px;height:1.2px;background:#c9cbdd;"></div>
<div style="left:405.5px;top:906.4px;width:1249.75px;height:1.2px;background:#c9cbdd;"></div>
<span class="t" style="left:466.6px;top:765.75px;line-height:20px;font-size:16px;font-weight:700;letter-spacing:0.73px;">Процедура</span>
<span class="t" style="left:795.1px;top:765.75px;line-height:20px;font-size:16px;font-weight:700;letter-spacing:0.59px;">О</span>
<span class="t" style="left:834.6px;top:765.75px;line-height:20px;font-size:16px;font-weight:700;letter-spacing:2.13px;">Д</span>
<span class="t" style="left:874.6px;top:765.75px;line-height:20px;font-size:16px;font-weight:700;letter-spacing:0.73px;">Н</span>
<span class="t" style="left:914.1px;top:765.75px;line-height:20px;font-size:16px;font-weight:700;letter-spacing:0.5px;">Дата</span>
<span class="t" style="left:1005.85px;top:765.75px;line-height:20px;font-size:16px;font-weight:700;letter-spacing:0.27px;">Способ оплаты</span>
<span class="t" style="left:1203.35px;top:765.75px;line-height:20px;font-size:16px;font-weight:700;letter-spacing:0.92px;">Цена</span>
<span class="t" style="left:1334.6px;top:765.75px;line-height:20px;font-size:16px;font-weight:700;letter-spacing:0.89px;">Инициатор</span>
<svg style="left:949px;top:761px" width="12" height="8"><path d="M6 0l3.200 4.500H11.500V7H.5V4.500h2.300z" fill="#111"/></svg>
<svg style="left:388px;top:809px" width="8" height="5"><path d="M4 0l3.700 4.500H.3z" fill="#767676"/></svg>
<span class="t" style="left:405.85px;top:800.75px;line-height:20px;font-size:16px;font-weight:700;letter-spacing:0.78px;">Процедуры</span>
<svg style="left:419.8px;top:841.95px" width="26" height="10" viewBox="0 0 26 10"><defs><linearGradient id="gpg" x1="0" y1="0" x2="0" y2="1"><stop offset="0" stop-color="#0a9a18"/><stop offset="1" stop-color="#08cf38"/></linearGradient><linearGradient id="gpe" x1="0" y1="0" x2="0" y2="1"><stop offset="0" stop-color="#cdcdcd"/><stop offset="1" stop-color="#e8e8e8"/></linearGradient></defs><rect x="0" y="0" width="6.1" height="9.800" fill="url(#gpg)"/><rect x="7.1" y="0" width="5.2" height="9.800" fill="url(#gpe)"/><rect x="14" y="0" width="5.2" height="9.800" fill="url(#gpe)"/><rect x="20.2" y="0" width="4.8" height="9.800" fill="url(#gpe)"/></svg>
<svg style="left:758.8px;top:837.95px" width="18" height="17" viewBox="0 0 18 17"><defs><radialGradient id="gbb" cx=".55" cy=".5" r=".6"><stop offset="0" stop-color="#d3e3f9"/><stop offset=".6" stop-color="#e4eefb"/><stop offset="1" stop-color="#fff"/></radialGradient></defs><path d="M4.500 1.300h8.300a3.200 3.200 0 0 1 3.200 3.200v3.600a3.200 3.200 0 0 1-3.200 3.200h-1.300c-1.500 2-3.500 3.300-5.700 4 1-1.200 1.500-2.600 1.500-4H4.500a3.200 3.200 0 0 1-3.200-3.200V4.500a3.200 3.200 0 0 1 3.200-3.200z" fill="url(#gbb)" stroke="#7aa3cf" stroke-width="1.700" stroke-linejoin="round"/><rect x="3.300" y="3.300" width="10.700" height="1.600" fill="#fff" opacity=".9"/></svg>
<span class="t" style="left:466.6px;top:835.75px;line-height:21px;font-size:16.5px;letter-spacing:0.31px;">Массаж 60 мин</span>
<span class="t" style="left:795.1px;top:835.75px;line-height:21px;font-size:16.5px;letter-spacing:0.87px;">0</span>
<span class="t" style="left:834.6px;top:835.75px;line-height:21px;font-size:16.5px;letter-spacing:0.87px;">0</span>
<span class="t" style="left:875.1px;top:835.75px;line-height:21px;font-size:16.5px;letter-spacing:-2.63px;">1</span>
<span class="t" style="left:914.6px;top:835.75px;line-height:21px;font-size:16.5px;letter-spacing:-0.23px;">10.03.2023</span>
<span class="t" style="left:1024.1px;top:826px;line-height:21px;font-size:16.5px;letter-spacing:0.05px;">Оплата из</span>
<span class="t" style="left:1024.1px;top:845.5px;line-height:21px;font-size:16.5px;letter-spacing:0.59px;">программы</span>
<span class="t" style="left:1247.1px;top:835.75px;line-height:21px;font-size:16.5px;letter-spacing:-0.04px;">1 000,00 <span class="rub">₽</span></span>
<span class="t" style="left:1334.6px;top:835.75px;line-height:21px;font-size:16.5px;letter-spacing:0.01px;">Лебедева О.Н.</span>
<span class="t" style="left:466.6px;top:876.5px;line-height:21px;font-size:16.5px;letter-spacing:0.31px;text-decoration:line-through;">Массаж 60 мин</span>
<span class="t" style="left:795.1px;top:876.5px;line-height:21px;font-size:16.5px;letter-spacing:0.87px;">0</span>
<span class="t" style="left:836.1px;top:876.5px;line-height:21px;font-size:16.5px;letter-spacing:-2.63px;">1</span>
<span class="t" style="left:874.6px;top:876.5px;line-height:21px;font-size:16.5px;letter-spacing:0.87px;text-decoration:line-through;">2</span>
<span class="t" style="left:914.6px;top:876.5px;line-height:21px;font-size:16.5px;letter-spacing:-0.23px;">10.03.2023</span>
<span class="t" style="left:1024.1px;top:866.75px;line-height:21px;font-size:16.5px;letter-spacing:0.05px;">Оплата из</span>
<span class="t" style="left:1024.1px;top:886.25px;line-height:21px;font-size:16.5px;letter-spacing:0.59px;">программы</span>
<span class="t" style="left:1246.1px;top:876.5px;line-height:21px;font-size:16.5px;letter-spacing:0.06px;">2 000,00 <span class="rub">₽</span></span>
<span class="t" style="left:1334.6px;top:876.5px;line-height:21px;font-size:16.5px;letter-spacing:0px;">Иванова А.С.</span>
<span class="t" style="left:466.6px;top:917.75px;line-height:21px;font-size:16.5px;letter-spacing:0.31px;text-decoration:line-through;">Массаж 60 мин</span>
<span class="t" style="left:795.1px;top:917.75px;line-height:21px;font-size:16.5px;letter-spacing:0.87px;">0</span>
<span class="t" style="left:836.1px;top:917.75px;line-height:21px;font-size:16.5px;letter-spacing:-2.63px;">1</span>
<span class="t" style="left:874.6px;top:917.75px;line-height:21px;font-size:16.5px;letter-spacing:0.87px;text-decoration:line-through;">2</span>
<span class="t" style="left:914.6px;top:917.75px;line-height:21px;font-size:16.5px;letter-spacing:-0.23px;">10.03.2023</span>
<span class="t" style="left:1024.1px;top:908px;line-height:21px;font-size:16.5px;letter-spacing:0.05px;">Оплата из</span>
<span class="t" style="left:1024.1px;top:927.5px;line-height:21px;font-size:16.5px;letter-spacing:0.59px;">программы</span>
<span class="t" style="left:1246.1px;top:917.75px;line-height:21px;font-size:16.5px;letter-spacing:0.06px;">2 000,00 <span class="rub">₽</span></span>
<span class="t" style="left:1334.6px;top:917.75px;line-height:21px;font-size:16.5px;letter-spacing:0px;">Иванова А.С.</span>
<div style="left:1655.5px;top:757.5px;width:6px;height:214.5px;background:#e9e9e9;"></div>
<div style="left:1661.5px;top:758.25px;width:365.5px;height:216.75px;background:#f9f9f9;border:1.5px solid #c6c6c6;"></div>
<span class="t" style="left:1669.2px;top:765.5px;line-height:20px;font-size:16px;font-weight:700;letter-spacing:0.83px;">Массаж 60 мин</span>
<div style="left:1669px;top:798.25px;width:350px;height:28.5px;background:#fff;border:1px solid #7f9c82;"></div>
<span class="t" style="left:1670.6px;top:837.9px;line-height:21px;font-size:16.5px;color:#111;letter-spacing:0.18px;">Назначил:</span>
<span class="t" style="left:1768.6px;top:837.9px;line-height:21px;font-size:16.5px;color:#111;letter-spacing:0px;">Иванова А.С.</span>
<span class="t" style="left:1670.6px;top:865.8px;line-height:21px;font-size:16.5px;color:#111;letter-spacing:0.24px;">Количество:</span>
<div style="left:1768px;top:860px;width:145.5px;height:28.5px;background:#fff;border:1px solid #c9cbdd;"></div>
<span class="t" style="left:1879.1px;top:866px;line-height:21px;font-size:16.5px;color:#8c8c8c;letter-spacing:0.37px;">2</span>
<svg style="left:1900.500px;top:865.500px" width="10" height="20"><path d="M.5 4.800L4.500 .5l4 4.300zM.5 14.500h8l-4 4.300z" fill="#c6c9dc"/></svg>
<div style="left:1922px;top:866px;width:17px;height:17px;background:#f2f2f2;border:1px solid #d6d6d6;"></div>
<div style="left:1944px;top:862px;width:75px;height:26px;overflow:hidden;"><span class="t" style="left:0;top:2px;line-height:22px;font-size:17px;color:#5c5c5c;letter-spacing:-.3px">На весь срок</span></div>
<span class="t" style="left:1670.6px;top:899px;line-height:21px;font-size:16.5px;color:#111;letter-spacing:0.06px;">Кратность:</span>
<div style="left:1770px;top:893px;width:142.75px;height:28.5px;background:#eeeeee;border:1px solid #dcdcdc;"></div>
<svg style="left:1896.500px;top:903.800px" width="9" height="6"><path d="M.8 .8l3.300 3.600L7.400 .8" stroke="#8e8e8e" stroke-width="1" fill="none"/></svg>
<span class="t" style="left:1670.6px;top:932.9px;line-height:21px;font-size:16.5px;color:#111;letter-spacing:-0.01px;">Начать с:</span>
<div style="left:1770px;top:927px;width:130.5px;height:30.5px;background:#fafafa;border:1px solid #d9d9e6;"></div>
<span class="t" style="left:1779.2px;top:931.5px;line-height:21px;font-size:16.5px;color:#c9c9c9;letter-spacing:-0.19px;font-style:italic;">Выберите д</span>
<svg style="left:1881.8px;top:934.3px" width="14" height="16" viewBox="0 0 14 16"><rect x=".6" y="2.600" width="12" height="12.500" fill="#fdfdfd" stroke="#474747" stroke-width="1.100"/><rect x=".6" y="2.600" width="12" height="3" fill="#474747"/><rect x="2.600" y=".3" width="1.700" height="4" fill="#474747" stroke="#fafafa" stroke-width=".6"/><rect x="8.900" y=".3" width="1.700" height="4" fill="#474747" stroke="#fafafa" stroke-width=".6"/><text x="6.800" y="13.600" text-anchor="middle" font-family="Liberation Sans,sans-serif" font-size="7.500" font-weight="700" fill="#3a3a3a">7</text></svg>
<div style="left:1702px;top:161px;width:364px;height:135px;background:#f0f1f7;border:3px solid #e61e2a;"></div>
<span class="t" style="left:1711.5px;top:166px;line-height:19px;font-size:15.5px;color:#595959;letter-spacing:0.35px;">Сумма на лечение по программе:</span>
<span class="t" style="left:1976.8px;top:166px;line-height:19px;font-size:15.5px;color:#595959;letter-spacing:0.09px;">21 000,00 <span class="rub">₽</span></span>
<span class="t" style="left:1827.3px;top:198.5px;line-height:19px;font-size:15.5px;color:#595959;letter-spacing:0.38px;">Из них назначено:</span>
<span class="t" style="left:1985.4px;top:198.5px;line-height:19px;font-size:15.5px;color:#595959;letter-spacing:0.1px;">4 200,00 <span class="rub">₽</span></span>
<span class="t" style="left:1818.7px;top:217.1px;line-height:19px;font-size:15.5px;color:#595959;letter-spacing:0.46px;">Диспетчеризовано:</span>
<span class="t" style="left:1986px;top:217.1px;line-height:19px;font-size:15.5px;color:#595959;letter-spacing:0.04px;">1 200,00 <span class="rub">₽</span></span>
<span class="t" style="left:1883.8px;top:236.8px;line-height:19px;font-size:15.5px;color:#595959;letter-spacing:0.33px;">Отпущено:</span>
<span class="t" style="left:1986px;top:236.8px;line-height:19px;font-size:15.5px;color:#595959;letter-spacing:0.04px;">1 200,00 <span class="rub">₽</span></span>
<span class="t" style="left:1764px;top:269.1px;line-height:19px;font-size:15.5px;color:#595959;letter-spacing:0.27px;">Нераспределенный лимит:</span>
<span class="t" style="left:1977.8px;top:269.1px;line-height:19px;font-size:15.5px;color:#595959;letter-spacing:0px;">16 800,00 <span class="rub">₽</span></span>
<div style="left:0px;top:966.8px;width:2067px;height:2.2px;background:#fff;"></div>
<div style="left:0px;top:0px;width:1.4px;height:969px;background:#fff;"></div>
<div style="left:1.4px;top:0px;width:0.9px;height:969px;background:#4c4c4c;"></div>
</body></html>
